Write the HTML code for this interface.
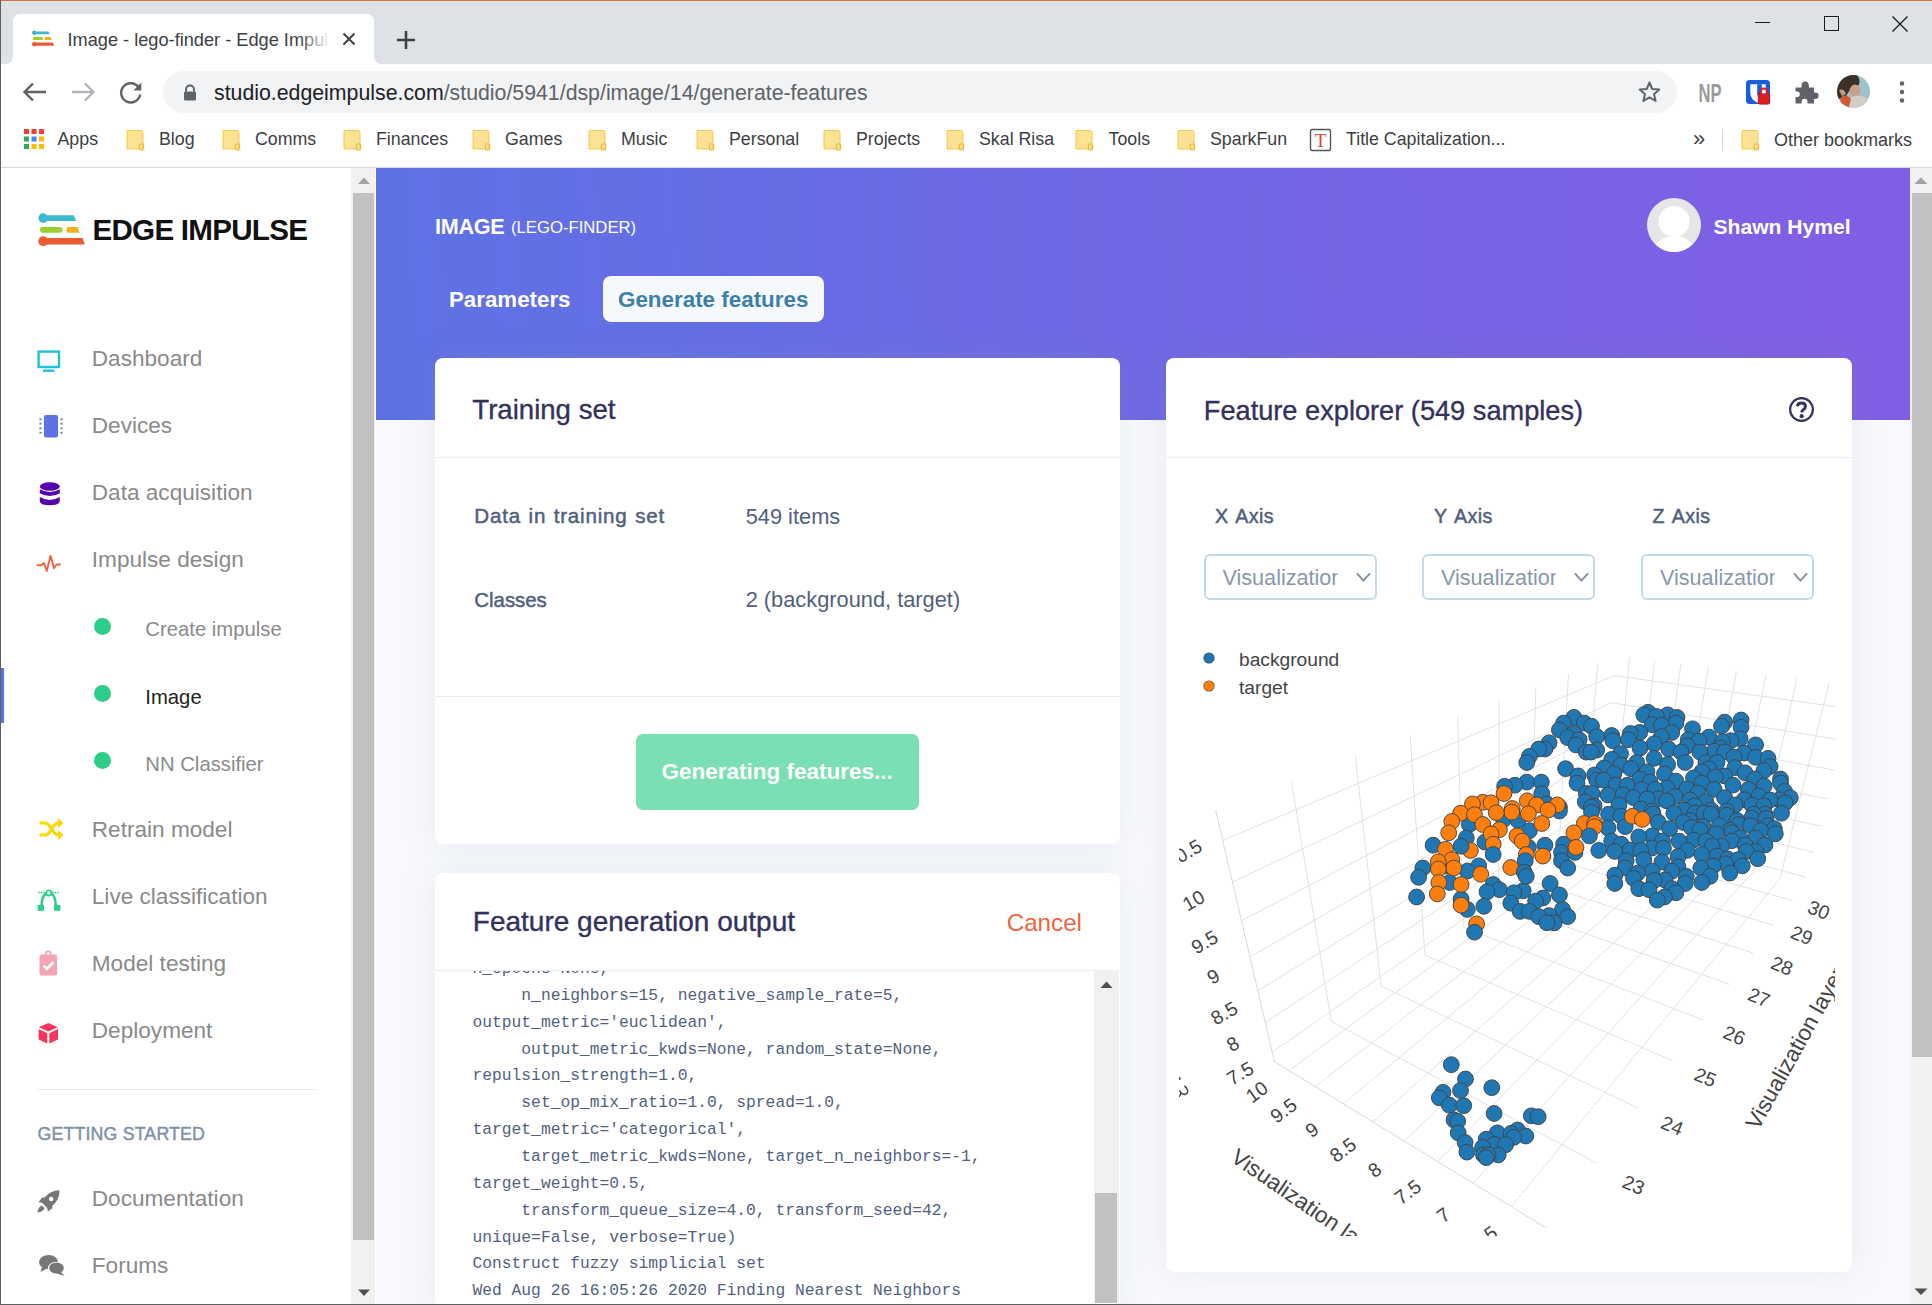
<!DOCTYPE html><html><head><meta charset='utf-8'><title>Image - lego-finder - Edge Impulse</title>
<style>
html,body{margin:0;padding:0;}
body{width:1932px;height:1305px;overflow:hidden;position:relative;background:#fff;font-family:'Liberation Sans',sans-serif;}
.t{position:absolute;white-space:pre;}
.r{position:absolute;}
</style></head><body>
<div class='r' style='left:0px;top:0px;width:1932px;height:64px;background:#dee1e6;'></div><div class='r' style='left:0px;top:0px;width:1932px;height:1px;background:#d4703c;'></div><svg class='r' style='left:0px;top:13px;' width='390' height='52' viewBox='0 0 390 52'><path d='M5 51 Q13 51 13 43 L13 9 Q13 1 21 1 L366 1 Q374 1 374 9 L374 43 Q374 51 382 51 Z' fill='#fff'/></svg><svg class='r' style='left:30px;top:29px;' width='28' height='20' viewBox='0 0 28 20'>
<path d='M4.3 2.4 H18.5 L19.8 5.2 H4.3 Z' fill='#3cb8cf'/><circle cx='4.3' cy='3.8' r='2.2' fill='#3cb8cf'/>
<rect x='2.6' y='8' width='10.6' height='3' rx='1.5' fill='#9bcf2a'/>
<path d='M15.2 8 H20.6 L21.7 11 H15.2 Q14.4 11 14.4 9.5 Q14.4 8 15.2 8Z' fill='#f2b01e'/>
<path d='M4.3 13.6 H23 L24.2 16.8 H4.3 Z' fill='#ec5a33'/><circle cx='4.3' cy='15.2' r='2.3' fill='#ec5a33'/>
</svg><div class='t' style='left:67.50px;top:31.15px;font-size:18.2px;line-height:18.2px;color:#3c4043;font-weight:normal;letter-spacing:0px;font-family:"Liberation Sans", sans-serif;'>Image - lego-finder - Edge Impul</div><div class='r' style='left:300px;top:28px;width:30px;height:22px;background:linear-gradient(90deg,rgba(255,255,255,0),#fff);'></div><svg class='r' style='left:342px;top:32px;' width='14' height='14' viewBox='0 0 14 14'><path d='M1.5 1.5 L12.5 12.5 M12.5 1.5 L1.5 12.5' stroke='#3c4043' stroke-width='2'/></svg><svg class='r' style='left:396px;top:30px;' width='20' height='20' viewBox='0 0 20 20'><path d='M10 1 V19 M1 10 H19' stroke='#3c4043' stroke-width='2.6'/></svg><div class='r' style='left:1755px;top:22px;width:15px;height:1px;background:#1a1a1a;'></div><div class='r' style='left:1824px;top:16px;width:15px;height:15px;background:transparent;border:1.3px solid #1a1a1a;box-sizing:border-box'></div><svg class='r' style='left:1891px;top:15px;' width='18' height='18' viewBox='0 0 18 18'><path d='M1.5 1.5 L16.5 16.5 M16.5 1.5 L1.5 16.5' stroke='#1a1a1a' stroke-width='1.3'/></svg><div class='r' style='left:0px;top:64px;width:1932px;height:54px;background:#fff;'></div><svg class='r' style='left:20px;top:80px;' width='30' height='24' viewBox='0 0 30 24'><path d='M26 12 H5 M13 3.5 L4.5 12 L13 20.5' stroke='#5f6368' stroke-width='2.4' fill='none'/></svg><svg class='r' style='left:68px;top:80px;' width='30' height='24' viewBox='0 0 30 24'><path d='M4 12 H25 M17 3.5 L25.5 12 L17 20.5' stroke='#b0b3b8' stroke-width='2.4' fill='none'/></svg><svg class='r' style='left:116px;top:79px;' width='30' height='26' viewBox='0 0 30 26'><path d='M22.5 8.2 A9.6 9.6 0 1 0 24.2 15.5' stroke='#5f6368' stroke-width='2.4' fill='none'/><path d='M25.3 3.5 V11.5 H17.3 Z' fill='#5f6368'/></svg><div class='r' style='left:163px;top:71px;width:1514px;height:42px;background:#f1f3f4;border-radius:21px'></div><svg class='r' style='left:182px;top:84px;' width='16' height='18' viewBox='0 0 16 18'><path d='M4 7.5 V5.5 A4 4 0 0 1 12 5.5 V7.5' stroke='#5f6368' stroke-width='2' fill='none'/><rect x='2' y='7.5' width='12' height='9' rx='1.3' fill='#5f6368'/></svg><div class='t' style='left:214.00px;top:82.60px;font-size:21.3px;line-height:21.3px;color:#5f6368;font-weight:normal;letter-spacing:0px;font-family:"Liberation Sans", sans-serif;'><span style='color:#202124'>studio.edgeimpulse.com</span>/studio/5941/dsp/image/14/generate-features</div><svg class='r' style='left:1637px;top:80px;' width='25' height='24' viewBox='0 0 25 24'><path d='M12.5 2.5 L15.3 9 L22.3 9.6 L17 14.2 L18.6 21 L12.5 17.4 L6.4 21 L8 14.2 L2.7 9.6 L9.7 9 Z' stroke='#5f6368' stroke-width='2' fill='none' stroke-linejoin='round'/></svg><svg class='r' style='left:1697px;top:80px;' width='26' height='24' viewBox='0 0 26 24'><text x='1.5' y='22' font-family='Liberation Sans' font-weight='bold' font-size='25' fill='#9a9a9a' textLength='23' lengthAdjust='spacingAndGlyphs'>NP</text></svg><svg class='r' style='left:1744px;top:78px;' width='28' height='28' viewBox='0 0 28 28'><rect x='2' y='2' width='24' height='24' rx='3.5' fill='#175ddc'/><path d='M6.3 6.2 H21.7 V15 Q21.7 21.5 14 25 Q6.3 21.5 6.3 15 Z' fill='#fff'/><rect x='13.2' y='6.2' width='4.6' height='11' fill='#175ddc'/><rect x='14.2' y='15.6' width='11.4' height='10.6' rx='1.6' fill='#e11b22' stroke='#7a1010' stroke-width='0.6'/><path d='M16.8 15.8 V13.6 A3.1 3.1 0 0 1 23 13.6 V15.8' stroke='#e11b22' stroke-width='2' fill='none'/><circle cx='19.9' cy='14.6' r='1.1' fill='#fff'/></svg><svg class='r' style='left:1793px;top:79px;' width='26' height='26' viewBox='0 0 26 26'><path d='M2.5 8.5 H8.5 V7 Q8.5 2.5 12.2 2.5 Q15.9 2.5 15.9 7 V8.5 H21 V13.5 H22.2 Q25.6 13.5 25.6 16.7 Q25.6 19.9 22.2 19.9 H21 V24.5 H14.5 V22.5 Q14.5 19.8 11.6 19.8 Q8.7 19.8 8.7 22.5 V24.5 H2.5 V18 H4 Q6.8 18 6.8 15.2 Q6.8 12.4 4 12.4 H2.5 Z' fill='#5f6368'/></svg><svg class='r' style='left:1836px;top:74px;' width='36' height='36' viewBox='0 0 36 36'><defs><clipPath id='avc2'><circle cx='17.5' cy='17.5' r='16.5'/></clipPath></defs><g clip-path='url(#avc2)'><rect width='36' height='36' fill='#9fc3cb'/><path d='M0 0 H20 Q26 6 22 12 Q14 14 10 22 Q4 26 0 24 Z' fill='#3b3129'/><ellipse cx='19' cy='17' rx='5.5' ry='6.5' fill='#c7a287'/><path d='M14 24 Q22 19 30 24 L34 36 H12 Z' fill='#d3cfc6'/><path d='M6 22 Q12 20 15 25 L13 33 Q6 32 4 27 Z' fill='#cf5a34'/><path d='M3 16 Q8 14 10 20 L6 22 Z' fill='#c49a80'/></g></svg><svg class='r' style='left:1896px;top:80px;' width='12' height='24' viewBox='0 0 12 24'><circle cx='6' cy='3.5' r='2.2' fill='#5f6368'/><circle cx='6' cy='12' r='2.2' fill='#5f6368'/><circle cx='6' cy='20.5' r='2.2' fill='#5f6368'/></svg><div class='r' style='left:0px;top:118px;width:1932px;height:49px;background:#fff;'></div><div class='r' style='left:0px;top:167px;width:1932px;height:1px;background:#d7d9dc;'></div><svg class='r' style='left:24px;top:129px;' width='21' height='21' viewBox='0 0 21 21'><rect x='0.0' y='0.0' width='5' height='5' fill='#ea4335'/><rect x='7.5' y='0.0' width='5' height='5' fill='#ea4335'/><rect x='15.0' y='0.0' width='5' height='5' fill='#ea4335'/><rect x='0.0' y='7.5' width='5' height='5' fill='#34a853'/><rect x='7.5' y='7.5' width='5' height='5' fill='#4285f4'/><rect x='15.0' y='7.5' width='5' height='5' fill='#fbbc05'/><rect x='0.0' y='15.0' width='5' height='5' fill='#34a853'/><rect x='7.5' y='15.0' width='5' height='5' fill='#fbbc05'/><rect x='15.0' y='15.0' width='5' height='5' fill='#fbbc05'/></svg><div class='t' style='left:57.50px;top:131.35px;font-size:17.8px;line-height:17.8px;color:#3c4043;font-weight:normal;letter-spacing:0px;font-family:"Liberation Sans", sans-serif;'>Apps</div><svg class='r' style='left:125.5px;top:129px;' width='19' height='22' viewBox='0 0 19 22'><path d='M1 1.5 H15 Q17 1.5 17 3.5 V20 H1 Z' fill='#fde293' stroke='#f2c94c' stroke-width='1'/><rect x='13.3' y='15' width='4.4' height='6' rx='1' fill='none' stroke='#e7b728' stroke-width='1'/></svg><div class='t' style='left:159.00px;top:131.35px;font-size:17.8px;line-height:17.8px;color:#3c4043;font-weight:normal;letter-spacing:0px;font-family:"Liberation Sans", sans-serif;'>Blog</div><svg class='r' style='left:222px;top:129px;' width='19' height='22' viewBox='0 0 19 22'><path d='M1 1.5 H15 Q17 1.5 17 3.5 V20 H1 Z' fill='#fde293' stroke='#f2c94c' stroke-width='1'/><rect x='13.3' y='15' width='4.4' height='6' rx='1' fill='none' stroke='#e7b728' stroke-width='1'/></svg><div class='t' style='left:255.00px;top:131.35px;font-size:17.8px;line-height:17.8px;color:#3c4043;font-weight:normal;letter-spacing:0px;font-family:"Liberation Sans", sans-serif;'>Comms</div><svg class='r' style='left:343px;top:129px;' width='19' height='22' viewBox='0 0 19 22'><path d='M1 1.5 H15 Q17 1.5 17 3.5 V20 H1 Z' fill='#fde293' stroke='#f2c94c' stroke-width='1'/><rect x='13.3' y='15' width='4.4' height='6' rx='1' fill='none' stroke='#e7b728' stroke-width='1'/></svg><div class='t' style='left:376.00px;top:131.35px;font-size:17.8px;line-height:17.8px;color:#3c4043;font-weight:normal;letter-spacing:0px;font-family:"Liberation Sans", sans-serif;'>Finances</div><svg class='r' style='left:472px;top:129px;' width='19' height='22' viewBox='0 0 19 22'><path d='M1 1.5 H15 Q17 1.5 17 3.5 V20 H1 Z' fill='#fde293' stroke='#f2c94c' stroke-width='1'/><rect x='13.3' y='15' width='4.4' height='6' rx='1' fill='none' stroke='#e7b728' stroke-width='1'/></svg><div class='t' style='left:505.00px;top:131.35px;font-size:17.8px;line-height:17.8px;color:#3c4043;font-weight:normal;letter-spacing:0px;font-family:"Liberation Sans", sans-serif;'>Games</div><svg class='r' style='left:588px;top:129px;' width='19' height='22' viewBox='0 0 19 22'><path d='M1 1.5 H15 Q17 1.5 17 3.5 V20 H1 Z' fill='#fde293' stroke='#f2c94c' stroke-width='1'/><rect x='13.3' y='15' width='4.4' height='6' rx='1' fill='none' stroke='#e7b728' stroke-width='1'/></svg><div class='t' style='left:621.00px;top:131.35px;font-size:17.8px;line-height:17.8px;color:#3c4043;font-weight:normal;letter-spacing:0px;font-family:"Liberation Sans", sans-serif;'>Music</div><svg class='r' style='left:695.5px;top:129px;' width='19' height='22' viewBox='0 0 19 22'><path d='M1 1.5 H15 Q17 1.5 17 3.5 V20 H1 Z' fill='#fde293' stroke='#f2c94c' stroke-width='1'/><rect x='13.3' y='15' width='4.4' height='6' rx='1' fill='none' stroke='#e7b728' stroke-width='1'/></svg><div class='t' style='left:729.00px;top:131.35px;font-size:17.8px;line-height:17.8px;color:#3c4043;font-weight:normal;letter-spacing:0px;font-family:"Liberation Sans", sans-serif;'>Personal</div><svg class='r' style='left:823px;top:129px;' width='19' height='22' viewBox='0 0 19 22'><path d='M1 1.5 H15 Q17 1.5 17 3.5 V20 H1 Z' fill='#fde293' stroke='#f2c94c' stroke-width='1'/><rect x='13.3' y='15' width='4.4' height='6' rx='1' fill='none' stroke='#e7b728' stroke-width='1'/></svg><div class='t' style='left:856.00px;top:131.35px;font-size:17.8px;line-height:17.8px;color:#3c4043;font-weight:normal;letter-spacing:0px;font-family:"Liberation Sans", sans-serif;'>Projects</div><svg class='r' style='left:945.5px;top:129px;' width='19' height='22' viewBox='0 0 19 22'><path d='M1 1.5 H15 Q17 1.5 17 3.5 V20 H1 Z' fill='#fde293' stroke='#f2c94c' stroke-width='1'/><rect x='13.3' y='15' width='4.4' height='6' rx='1' fill='none' stroke='#e7b728' stroke-width='1'/></svg><div class='t' style='left:979.00px;top:131.35px;font-size:17.8px;line-height:17.8px;color:#3c4043;font-weight:normal;letter-spacing:0px;font-family:"Liberation Sans", sans-serif;'>Skal Risa</div><svg class='r' style='left:1075px;top:129px;' width='19' height='22' viewBox='0 0 19 22'><path d='M1 1.5 H15 Q17 1.5 17 3.5 V20 H1 Z' fill='#fde293' stroke='#f2c94c' stroke-width='1'/><rect x='13.3' y='15' width='4.4' height='6' rx='1' fill='none' stroke='#e7b728' stroke-width='1'/></svg><div class='t' style='left:1108.60px;top:131.35px;font-size:17.8px;line-height:17.8px;color:#3c4043;font-weight:normal;letter-spacing:0px;font-family:"Liberation Sans", sans-serif;'>Tools</div><svg class='r' style='left:1177px;top:129px;' width='19' height='22' viewBox='0 0 19 22'><path d='M1 1.5 H15 Q17 1.5 17 3.5 V20 H1 Z' fill='#fde293' stroke='#f2c94c' stroke-width='1'/><rect x='13.3' y='15' width='4.4' height='6' rx='1' fill='none' stroke='#e7b728' stroke-width='1'/></svg><div class='t' style='left:1210.00px;top:131.35px;font-size:17.8px;line-height:17.8px;color:#3c4043;font-weight:normal;letter-spacing:0px;font-family:"Liberation Sans", sans-serif;'>SparkFun</div><svg class='r' style='left:1309px;top:128px;' width='24' height='24' viewBox='0 0 24 24'><rect x='1.5' y='1.5' width='20' height='21' rx='1.5' fill='#fff' stroke='#555' stroke-width='1.4'/><text x='11.5' y='19' font-family='Liberation Serif' font-size='19' fill='#e0452b' text-anchor='middle'>T</text></svg><div class='t' style='left:1346.00px;top:131.35px;font-size:17.8px;line-height:17.8px;color:#3c4043;font-weight:normal;letter-spacing:0px;font-family:"Liberation Sans", sans-serif;'>Title Capitalization...</div><div class='t' style='left:1693.00px;top:127.75px;font-size:22px;line-height:22px;color:#3c4043;font-weight:normal;letter-spacing:0px;font-family:"Liberation Sans", sans-serif;'>&#187;</div><div class='r' style='left:1722px;top:129px;width:1px;height:22px;background:#d7d9dc;'></div><svg class='r' style='left:1741px;top:129px;' width='19' height='22' viewBox='0 0 19 22'><path d='M1 1.5 H15 Q17 1.5 17 3.5 V20 H1 Z' fill='#fde293' stroke='#f2c94c' stroke-width='1'/><rect x='13.3' y='15' width='4.4' height='6' rx='1' fill='none' stroke='#e7b728' stroke-width='1'/></svg><div class='t' style='left:1774.00px;top:131.25px;font-size:18.0px;line-height:18.0px;color:#3c4043;font-weight:normal;letter-spacing:0px;font-family:"Liberation Sans", sans-serif;'>Other bookmarks</div><div class='r' style='left:0px;top:0px;width:1px;height:1305px;background:#606060;'></div><div class='r' style='left:1px;top:168px;width:350px;height:1137px;background:#fff;'></div><div class='r' style='left:351px;top:168px;width:24px;height:1137px;background:#f1f1f1;'></div><div class='r' style='left:353px;top:193px;width:21px;height:1047px;background:#c1c1c1;'></div><svg class='r' style='left:357px;top:176px;' width='14' height='10' viewBox='0 0 14 10'><path d='M1 8 L7 1.5 L13 8 Z' fill='#a3a3a3'/></svg><svg class='r' style='left:357px;top:1288px;' width='14' height='10' viewBox='0 0 14 10'><path d='M1 1.5 L7 8 L13 1.5 Z' fill='#505050'/></svg><div class='r' style='left:375px;top:168px;width:1px;height:1137px;background:#fff;'></div><div class='r' style='left:376px;top:168px;width:1534px;height:1137px;background:#f8f9fe;'></div><div class='r' style='left:376px;top:168px;width:1534px;height:252px;background:linear-gradient(87deg,#5e72e4 0,#825ee4 100%);'></div><div class='r' style='left:1910px;top:168px;width:22px;height:1137px;background:#f1f1f1;'></div><div class='r' style='left:1912px;top:193px;width:20px;height:864px;background:#c1c1c1;'></div><svg class='r' style='left:1913px;top:176px;' width='16' height='10' viewBox='0 0 16 10'><path d='M1.5 8 L8 1.5 L14.5 8 Z' fill='#a3a3a3'/></svg><svg class='r' style='left:1913px;top:1287px;' width='16' height='10' viewBox='0 0 16 10'><path d='M1.5 1.5 L8 8 L14.5 1.5 Z' fill='#505050'/></svg><svg class='r' style='left:37px;top:212px;' width='50' height='36' viewBox='0 0 50 36'>
<path d='M6.2 3.2 H36.6 L39.2 9 H6.2 Z' fill='#3cb8cf'/><circle cx='6.2' cy='6.1' r='4.8' fill='#3cb8cf'/>
<rect x='3' y='15' width='22.6' height='5.7' rx='2.85' fill='#9bcf2a'/>
<path d='M30.5 15 H40.5 L42.7 20.7 H30.5 Q29.5 20.7 29.5 17.85 Q29.5 15 30.5 15 Z' fill='#f2b01e'/>
<path d='M6.2 26 H45.6 L47.8 32.4 H6.2 Z' fill='#ec5a33'/><circle cx='6.2' cy='29.2' r='4.9' fill='#ec5a33'/>
</svg><div class='t' style='left:92.50px;top:214.95px;font-size:29.6px;line-height:29.6px;color:#111;font-weight:bold;letter-spacing:-0.75px;font-family:"Liberation Sans", sans-serif;'>EDGE IMPULSE</div><div class='t' style='left:91.80px;top:348.45px;font-size:22.6px;line-height:22.6px;color:#8a8a8a;font-weight:normal;letter-spacing:0px;font-family:"Liberation Sans", sans-serif;'>Dashboard</div><div class='t' style='left:91.80px;top:415.45px;font-size:22.6px;line-height:22.6px;color:#8a8a8a;font-weight:normal;letter-spacing:0px;font-family:"Liberation Sans", sans-serif;'>Devices</div><div class='t' style='left:91.80px;top:482.45px;font-size:22.6px;line-height:22.6px;color:#8a8a8a;font-weight:normal;letter-spacing:0px;font-family:"Liberation Sans", sans-serif;'>Data acquisition</div><div class='t' style='left:91.80px;top:549.45px;font-size:22.6px;line-height:22.6px;color:#8a8a8a;font-weight:normal;letter-spacing:0px;font-family:"Liberation Sans", sans-serif;'>Impulse design</div><div class='t' style='left:91.80px;top:819.45px;font-size:22.6px;line-height:22.6px;color:#8a8a8a;font-weight:normal;letter-spacing:0px;font-family:"Liberation Sans", sans-serif;'>Retrain model</div><div class='t' style='left:91.80px;top:886.45px;font-size:22.6px;line-height:22.6px;color:#8a8a8a;font-weight:normal;letter-spacing:0px;font-family:"Liberation Sans", sans-serif;'>Live classification</div><div class='t' style='left:91.80px;top:953.45px;font-size:22.6px;line-height:22.6px;color:#8a8a8a;font-weight:normal;letter-spacing:0px;font-family:"Liberation Sans", sans-serif;'>Model testing</div><div class='t' style='left:91.80px;top:1020.45px;font-size:22.6px;line-height:22.6px;color:#8a8a8a;font-weight:normal;letter-spacing:0px;font-family:"Liberation Sans", sans-serif;'>Deployment</div><div class='t' style='left:145.30px;top:619.10px;font-size:20.3px;line-height:20.3px;color:#8a8a8a;font-weight:normal;letter-spacing:0px;font-family:"Liberation Sans", sans-serif;'>Create impulse</div><div class='r' style='left:93.5px;top:617.7px;width:17px;height:17px;border-radius:50%;background:#2dce89'></div><div class='t' style='left:145.30px;top:687.10px;font-size:20.3px;line-height:20.3px;color:#222;font-weight:normal;letter-spacing:0px;font-family:"Liberation Sans", sans-serif;'>Image</div><div class='r' style='left:93.5px;top:685.0px;width:17px;height:17px;border-radius:50%;background:#2dce89'></div><div class='t' style='left:145.30px;top:754.10px;font-size:20.3px;line-height:20.3px;color:#8a8a8a;font-weight:normal;letter-spacing:0px;font-family:"Liberation Sans", sans-serif;'>NN Classifier</div><div class='r' style='left:93.5px;top:752.3px;width:17px;height:17px;border-radius:50%;background:#2dce89'></div><div class='r' style='left:1px;top:668px;width:3px;height:55px;background:#5e72e4;'></div><div class='r' style='left:37px;top:1089px;width:279px;height:1px;background:#e9ecef;'></div><div class='t' style='left:37.50px;top:1126.35px;font-size:17.8px;line-height:17.8px;color:#8092a8;font-weight:normal;letter-spacing:0.15px;font-family:"Liberation Sans", sans-serif;-webkit-text-stroke:0.45px #8092a8'>GETTING STARTED</div><div class='t' style='left:91.80px;top:1188.45px;font-size:22.6px;line-height:22.6px;color:#8a8a8a;font-weight:normal;letter-spacing:0px;font-family:"Liberation Sans", sans-serif;'>Documentation</div><div class='t' style='left:91.80px;top:1255.45px;font-size:22.6px;line-height:22.6px;color:#8a8a8a;font-weight:normal;letter-spacing:0px;font-family:"Liberation Sans", sans-serif;'>Forums</div><svg class='r' style='left:36px;top:349px;' width='26' height='25' viewBox='0 0 26 25'><rect x='2.6' y='2.6' width='20.4' height='15.4' fill='none' stroke='#1fc0de' stroke-width='2.4'/><rect x='7' y='20.5' width='11.5' height='2.4' fill='#1fc0de'/></svg><svg class='r' style='left:38px;top:413px;' width='26' height='27' viewBox='0 0 26 27'><rect x='6' y='2' width='14' height='22.5' rx='2' fill='#5e72e4'/><path d='M1.5 5 L4.5 6.2 L1.5 7.4Z' fill='#5e72e4'/><path d='M24.5 5 L21.5 6.2 L24.5 7.4Z' fill='#5e72e4'/><path d='M1.5 9.5 L4.5 10.7 L1.5 11.9Z' fill='#5e72e4'/><path d='M24.5 9.5 L21.5 10.7 L24.5 11.9Z' fill='#5e72e4'/><path d='M1.5 14 L4.5 15.2 L1.5 16.4Z' fill='#5e72e4'/><path d='M24.5 14 L21.5 15.2 L24.5 16.4Z' fill='#5e72e4'/><path d='M1.5 18.5 L4.5 19.7 L1.5 20.9Z' fill='#5e72e4'/><path d='M24.5 18.5 L21.5 19.7 L24.5 20.9Z' fill='#5e72e4'/></svg><svg class='r' style='left:38px;top:480px;' width='24' height='27' viewBox='0 0 24 27'><ellipse cx='11.8' cy='6.5' rx='10' ry='4.3' fill='#5603ad'/>
<path d='M1.8 9.2 Q11.8 15 21.8 9.2 V13.2 Q11.8 19 1.8 13.2 Z' fill='#5603ad'/>
<path d='M1.8 17 Q11.8 22.8 21.8 17 V20.8 Q21.8 25.3 11.8 25.3 Q1.8 25.3 1.8 20.8 Z' fill='#5603ad'/></svg><svg class='r' style='left:36px;top:553px;' width='26' height='22' viewBox='0 0 26 22'><path d='M1.5 12.2 H5.5 L7.8 9.8 L10.8 18 L14.6 2.8 L18 15.2 L20.5 11.5 L24 11.5' stroke='#f0633f' stroke-width='1.9' fill='none' stroke-linejoin='round' stroke-linecap='round'/></svg><svg class='r' style='left:37px;top:817px;' width='28' height='25' viewBox='0 0 28 25'><path d='M2.5 6 H8 Q11 6 13.5 10 L16 14 Q18.5 18 21.5 18 H23' stroke='#ffd600' stroke-width='3.2' fill='none'/>
<path d='M2.5 18 H8 Q11 18 13.5 14 L16 10 Q18.5 6 21.5 6 H23' stroke='#ffd600' stroke-width='3.2' fill='none'/>
<path d='M21 1 L26.5 6 L21 11Z' fill='#ffd600'/><path d='M21 13 L26.5 18 L21 23Z' fill='#ffd600'/></svg><svg class='r' style='left:35px;top:888px;' width='28' height='24' viewBox='0 0 28 24'><path d='M6.5 20 Q6.5 5 13.7 5 Q20.8 5 20.8 20' stroke='#2dce89' stroke-width='2.6' fill='none'/>
<rect x='2.6' y='17' width='6.4' height='5.8' fill='#2dce89'/><rect x='19' y='17' width='6.4' height='5.8' fill='#2dce89'/>
<circle cx='13.7' cy='5' r='2.6' fill='#fff' stroke='#2dce89' stroke-width='1.8'/>
<path d='M3 4.5 H10.5 M17 4.5 H24' stroke='#2dce89' stroke-width='1.3' stroke-dasharray='1.6 1'/></svg><svg class='r' style='left:37px;top:950px;' width='24' height='28' viewBox='0 0 24 28'><rect x='2.5' y='4.6' width='17.6' height='20.8' rx='1.6' fill='#f3a4b5'/><circle cx='11.3' cy='4' r='2.6' fill='none' stroke='#f3a4b5' stroke-width='1.6'/>
<path d='M6.5 15.5 L9.8 18.8 L16.4 12' stroke='#fff' stroke-width='2.6' fill='none'/></svg><svg class='r' style='left:37px;top:1021px;' width='23' height='24' viewBox='0 0 23 24'><path d='M11.3 2 L20.8 6.2 L11.3 10.5 L1.8 6.2 Z' fill='#f5365c'/>
<path d='M1.6 8 L10.3 12.2 V22.6 L1.6 18.4 Z' fill='#f5365c'/><path d='M21 8 L12.3 12.2 V22.6 L21 18.4 Z' fill='#f5365c'/></svg><svg class='r' style='left:35px;top:1188px;' width='27' height='27' viewBox='0 0 27 27'><path d='M24.6 2.2 Q15 2.5 9.5 9.5 L6.8 9.8 L3.5 14.2 L7 14.8 L12.2 20 L12.8 23.5 L17.2 20.2 L17.5 17.5 Q24.5 12 24.6 2.2Z' fill='#777'/>
<circle cx='16.2' cy='11' r='2.2' fill='#fff'/><path d='M7 17.5 Q3 19 2.4 24.6 Q8 24 9.6 20Z' fill='#777'/></svg><svg class='r' style='left:38px;top:1253px;' width='30' height='25' viewBox='0 0 30 25'><ellipse cx='10.5' cy='9' rx='9.5' ry='7' fill='#777'/><path d='M4 14 L2.5 19 L9 15.5Z' fill='#777'/>
<ellipse cx='18.5' cy='15' rx='8.5' ry='6.3' fill='#fff'/><ellipse cx='18.5' cy='15' rx='7.3' ry='5.5' fill='#777'/><path d='M23 19 L26.5 23 L19 20.5Z' fill='#777'/></svg><div class='t' style='left:435.00px;top:215.95px;font-size:21.6px;line-height:21.6px;color:#fff;font-weight:bold;letter-spacing:-0.3px;font-family:"Liberation Sans", sans-serif;'>IMAGE</div><div class='t' style='left:511.00px;top:220.40px;font-size:16.7px;line-height:16.7px;color:#fff;font-weight:normal;letter-spacing:0px;font-family:"Liberation Sans", sans-serif;'>(LEGO-FINDER)</div><div class='t' style='left:449.00px;top:288.60px;font-size:22.3px;line-height:22.3px;color:#fff;font-weight:bold;letter-spacing:0px;font-family:"Liberation Sans", sans-serif;'>Parameters</div><div class='r' style='left:603px;top:276px;width:221px;height:46px;background:#f6f9fc;border-radius:8px'></div><div class='t' style='left:618.00px;top:288.55px;font-size:22.4px;line-height:22.4px;color:#3b7fa8;font-weight:bold;letter-spacing:0px;font-family:"Liberation Sans", sans-serif;'>Generate features</div><svg class='r' style='left:1646px;top:197px;' width='56' height='56' viewBox='0 0 56 56'><defs><clipPath id='avc'><circle cx='28' cy='28' r='27'/></clipPath></defs><circle cx='28' cy='28' r='27' fill='#e6e6e6'/><g clip-path='url(#avc)'><circle cx='28' cy='24.5' r='15.5' fill='#fff'/><ellipse cx='28' cy='56' rx='21' ry='17' fill='#fff'/></g></svg><div class='t' style='left:1713.50px;top:216.20px;font-size:21.1px;line-height:21.1px;color:#fff;font-weight:bold;letter-spacing:0px;font-family:"Liberation Sans", sans-serif;'>Shawn Hymel</div><div class='r' style='left:435px;top:358px;width:685px;height:486px;background:#fff;box-shadow:0 0 32px 0 rgba(136,152,170,.15);border-radius:8px'></div><div class='r' style='left:435px;top:457px;width:685px;height:1px;background:#ebedf2;'></div><div class='t' style='left:472.30px;top:395.95px;font-size:27.6px;line-height:27.6px;color:#32325d;font-weight:normal;letter-spacing:0px;font-family:"Liberation Sans", sans-serif;-webkit-text-stroke:0.35px #32325d'>Training set</div><div class='t' style='left:474.30px;top:506.45px;font-size:20.6px;line-height:20.6px;color:#525f7f;font-weight:normal;letter-spacing:0px;font-family:"Liberation Sans", sans-serif;letter-spacing:0.8px;word-spacing:1px;-webkit-text-stroke:0.5px #525f7f'>Data in training set</div><div class='t' style='left:745.70px;top:505.85px;font-size:21.8px;line-height:21.8px;color:#525f7f;font-weight:normal;letter-spacing:0px;font-family:"Liberation Sans", sans-serif;'>549 items</div><div class='t' style='left:474.30px;top:590.05px;font-size:20.4px;line-height:20.4px;color:#525f7f;font-weight:normal;letter-spacing:0px;font-family:"Liberation Sans", sans-serif;-webkit-text-stroke:0.5px #525f7f'>Classes</div><div class='t' style='left:745.70px;top:588.85px;font-size:21.8px;line-height:21.8px;color:#525f7f;font-weight:normal;letter-spacing:0px;font-family:"Liberation Sans", sans-serif;'>2 (background, target)</div><div class='r' style='left:435px;top:696px;width:685px;height:1px;background:#ebedf2;'></div><div class='r' style='left:636px;top:734px;width:283px;height:76px;background:#7adfb3;border-radius:7px'></div><div class='t' style='left:661.50px;top:760.50px;font-size:22.5px;line-height:22.5px;color:#fff;font-weight:bold;letter-spacing:0px;font-family:"Liberation Sans", sans-serif;'>Generating features...</div><div class='r' style='left:435px;top:873px;width:685px;height:440px;background:#fff;box-shadow:0 0 32px 0 rgba(136,152,170,.15);border-radius:8px'></div><div class='t' style='left:472.80px;top:907.75px;font-size:28.0px;line-height:28.0px;color:#32325d;font-weight:normal;letter-spacing:0px;font-family:"Liberation Sans", sans-serif;-webkit-text-stroke:0.35px #32325d'>Feature generation output</div><div class='t' style='right:850.00px;top:910.65px;font-size:24.2px;line-height:24.2px;color:#ee6541;font-weight:normal;letter-spacing:0px;font-family:"Liberation Sans", sans-serif;'>Cancel</div><div class='r' style='left:435px;top:970px;width:685px;height:1px;background:#ebedf2;'></div><div class='r' style='left:435px;top:971px;width:659px;height:332px;overflow:hidden'><div class='t' style='left:37.5px;top:-9.99px;font:16.3px/16.3px "Liberation Mono",monospace;color:#525f7f'>n_epochs=None,</div><div class='t' style='left:37.5px;top:16.86px;font:16.3px/16.3px "Liberation Mono",monospace;color:#525f7f'>     n_neighbors=15, negative_sample_rate=5,</div><div class='t' style='left:37.5px;top:43.71px;font:16.3px/16.3px "Liberation Mono",monospace;color:#525f7f'>output_metric='euclidean',</div><div class='t' style='left:37.5px;top:70.56px;font:16.3px/16.3px "Liberation Mono",monospace;color:#525f7f'>     output_metric_kwds=None, random_state=None,</div><div class='t' style='left:37.5px;top:97.41px;font:16.3px/16.3px "Liberation Mono",monospace;color:#525f7f'>repulsion_strength=1.0,</div><div class='t' style='left:37.5px;top:124.26px;font:16.3px/16.3px "Liberation Mono",monospace;color:#525f7f'>     set_op_mix_ratio=1.0, spread=1.0,</div><div class='t' style='left:37.5px;top:151.11px;font:16.3px/16.3px "Liberation Mono",monospace;color:#525f7f'>target_metric='categorical',</div><div class='t' style='left:37.5px;top:177.96px;font:16.3px/16.3px "Liberation Mono",monospace;color:#525f7f'>     target_metric_kwds=None, target_n_neighbors=-1,</div><div class='t' style='left:37.5px;top:204.81px;font:16.3px/16.3px "Liberation Mono",monospace;color:#525f7f'>target_weight=0.5,</div><div class='t' style='left:37.5px;top:231.66px;font:16.3px/16.3px "Liberation Mono",monospace;color:#525f7f'>     transform_queue_size=4.0, transform_seed=42,</div><div class='t' style='left:37.5px;top:258.51px;font:16.3px/16.3px "Liberation Mono",monospace;color:#525f7f'>unique=False, verbose=True)</div><div class='t' style='left:37.5px;top:285.36px;font:16.3px/16.3px "Liberation Mono",monospace;color:#525f7f'>Construct fuzzy simplicial set</div><div class='t' style='left:37.5px;top:312.21px;font:16.3px/16.3px "Liberation Mono",monospace;color:#525f7f'>Wed Aug 26 16:05:26 2020 Finding Nearest Neighbors</div></div><div class='r' style='left:1094px;top:971px;width:25px;height:332px;background:#f1f1f1;'></div><div class='r' style='left:1095px;top:1193px;width:22px;height:110px;background:#c1c1c1;'></div><svg class='r' style='left:1099px;top:980px;' width='15' height='10' viewBox='0 0 15 10'><path d='M1.5 8 L7.5 1.5 L13.5 8 Z' fill='#505050'/></svg><div class='r' style='left:1166px;top:358px;width:686px;height:914px;background:#fff;box-shadow:0 0 32px 0 rgba(136,152,170,.15);border-radius:8px'></div><div class='r' style='left:1166px;top:457px;width:686px;height:1px;background:#ebedf2;'></div><div class='t' style='left:1203.80px;top:397.15px;font-size:27.2px;line-height:27.2px;color:#32325d;font-weight:normal;letter-spacing:0px;font-family:"Liberation Sans", sans-serif;-webkit-text-stroke:0.35px #32325d'>Feature explorer (549 samples)</div><svg class='r' style='left:1788px;top:396px;' width='27' height='27' viewBox='0 0 27 27'><circle cx='13.5' cy='13.5' r='11.4' fill='none' stroke='#32325d' stroke-width='2.2'/><path d='M9.3 10.3 Q10 7 13.6 7 Q17.4 7 17.4 10.4 Q17.4 12.6 15.2 13.8 Q13.8 14.6 13.8 16.6' fill='none' stroke='#32325d' stroke-width='3' stroke-linecap='butt'/><circle cx='13.7' cy='20.2' r='2.1' fill='#32325d'/></svg><div class='t' style='left:1215.00px;top:507.40px;font-size:19.7px;line-height:19.7px;color:#525f7f;font-weight:normal;letter-spacing:0px;font-family:"Liberation Sans", sans-serif;letter-spacing:0.4px;word-spacing:2px;-webkit-text-stroke:0.5px #525f7f'>X Axis</div><div class='r' style='left:1203.5px;top:554px;width:173px;height:46px;background:#fff;border:2px solid #c3daec;border-radius:6px;box-sizing:border-box'></div><div class='r' style='left:1222.5px;top:560px;width:115px;height:34px;overflow:hidden'><div class='t' style='left:0;top:6.64px;font-size:21.6px;line-height:21.6px;color:#8898aa'>Visualization</div></div><svg class='r' style='left:1353.5px;top:570px;' width='19' height='14' viewBox='0 0 19 14'><path d='M3 3.3 L9.4 10.6 L16 3.3' stroke='#858f9c' stroke-width='2' fill='none'/></svg><div class='t' style='left:1434.00px;top:507.40px;font-size:19.7px;line-height:19.7px;color:#525f7f;font-weight:normal;letter-spacing:0px;font-family:"Liberation Sans", sans-serif;letter-spacing:0.4px;word-spacing:2px;-webkit-text-stroke:0.5px #525f7f'>Y Axis</div><div class='r' style='left:1422px;top:554px;width:173px;height:46px;background:#fff;border:2px solid #c3daec;border-radius:6px;box-sizing:border-box'></div><div class='r' style='left:1441px;top:560px;width:115px;height:34px;overflow:hidden'><div class='t' style='left:0;top:6.64px;font-size:21.6px;line-height:21.6px;color:#8898aa'>Visualization</div></div><svg class='r' style='left:1572px;top:570px;' width='19' height='14' viewBox='0 0 19 14'><path d='M3 3.3 L9.4 10.6 L16 3.3' stroke='#858f9c' stroke-width='2' fill='none'/></svg><div class='t' style='left:1652.60px;top:507.40px;font-size:19.7px;line-height:19.7px;color:#525f7f;font-weight:normal;letter-spacing:0px;font-family:"Liberation Sans", sans-serif;letter-spacing:0.4px;word-spacing:2px;-webkit-text-stroke:0.5px #525f7f'>Z Axis</div><div class='r' style='left:1641px;top:554px;width:173px;height:46px;background:#fff;border:2px solid #c3daec;border-radius:6px;box-sizing:border-box'></div><div class='r' style='left:1660px;top:560px;width:115px;height:34px;overflow:hidden'><div class='t' style='left:0;top:6.64px;font-size:21.6px;line-height:21.6px;color:#8898aa'>Visualization</div></div><svg class='r' style='left:1791px;top:570px;' width='19' height='14' viewBox='0 0 19 14'><path d='M3 3.3 L9.4 10.6 L16 3.3' stroke='#858f9c' stroke-width='2' fill='none'/></svg><div class='r' style='left:1204px;top:653px;width:10px;height:10px;border-radius:50%;background:#1f77b4;box-shadow:0 0 0 .6px #444'></div><div class='r' style='left:1204px;top:681px;width:10px;height:10px;border-radius:50%;background:#ff7f0e;box-shadow:0 0 0 .6px #444'></div><div class='t' style='left:1239.00px;top:650.15px;font-size:19.2px;line-height:19.2px;color:#444;font-weight:normal;letter-spacing:0px;font-family:"Liberation Sans", sans-serif;'>background</div><div class='t' style='left:1239.00px;top:678.15px;font-size:19.2px;line-height:19.2px;color:#444;font-weight:normal;letter-spacing:0px;font-family:"Liberation Sans", sans-serif;'>target</div><svg class='r' style='left:1179px;top:640px;overflow:hidden' width='656' height='596' viewBox='0 0 656 596'><g transform='translate(-1179 -640)'><line x1='1331.3' y1='1021.4' x2='1291.3' y2='780.8' stroke='#e2e2e2' stroke-width='1.0'/><line x1='1381.1' y1='986.1' x2='1355.3' y2='756.1' stroke='#e2e2e2' stroke-width='1.0'/><line x1='1424.9' y1='955.1' x2='1410.1' y2='735.1' stroke='#e2e2e2' stroke-width='1.0'/><line x1='1463.9' y1='927.5' x2='1457.6' y2='716.8' stroke='#e2e2e2' stroke-width='1.0'/><line x1='1498.7' y1='902.8' x2='1499.2' y2='700.8' stroke='#e2e2e2' stroke-width='1.0'/><line x1='1530.0' y1='880.6' x2='1535.9' y2='686.7' stroke='#e2e2e2' stroke-width='1.0'/><line x1='1558.3' y1='860.5' x2='1568.5' y2='674.1' stroke='#e2e2e2' stroke-width='1.0'/><line x1='1584.1' y1='842.3' x2='1597.6' y2='662.9' stroke='#e2e2e2' stroke-width='1.0'/><line x1='1272.1' y1='1052.2' x2='1600.9' y2='823.5' stroke='#e2e2e2' stroke-width='1.0'/><line x1='1265.2' y1='1022.4' x2='1602.9' y2='801.2' stroke='#e2e2e2' stroke-width='1.0'/><line x1='1257.8' y1='990.7' x2='1604.9' y2='778.0' stroke='#e2e2e2' stroke-width='1.0'/><line x1='1249.9' y1='956.9' x2='1607.1' y2='753.9' stroke='#e2e2e2' stroke-width='1.0'/><line x1='1241.4' y1='920.8' x2='1609.3' y2='728.8' stroke='#e2e2e2' stroke-width='1.0'/><line x1='1232.4' y1='882.1' x2='1611.6' y2='702.7' stroke='#e2e2e2' stroke-width='1.0'/><line x1='1222.7' y1='840.5' x2='1614.0' y2='675.5' stroke='#e2e2e2' stroke-width='1.0'/><line x1='1511.4' y1='1206.6' x2='1779.9' y2='878.7' stroke='#e2e2e2' stroke-width='1.0'/><line x1='1473.3' y1='1183.4' x2='1753.3' y2='871.6' stroke='#e2e2e2' stroke-width='1.0'/><line x1='1437.7' y1='1161.6' x2='1727.6' y2='864.8' stroke='#e2e2e2' stroke-width='1.0'/><line x1='1404.2' y1='1141.1' x2='1702.9' y2='858.2' stroke='#e2e2e2' stroke-width='1.0'/><line x1='1372.7' y1='1121.9' x2='1679.0' y2='851.8' stroke='#e2e2e2' stroke-width='1.0'/><line x1='1343.1' y1='1103.8' x2='1655.9' y2='845.7' stroke='#e2e2e2' stroke-width='1.0'/><line x1='1315.2' y1='1086.7' x2='1633.7' y2='839.7' stroke='#e2e2e2' stroke-width='1.0'/><line x1='1288.7' y1='1070.5' x2='1612.2' y2='834.0' stroke='#e2e2e2' stroke-width='1.0'/><line x1='1596.0' y1='1162.9' x2='1331.3' y2='1021.4' stroke='#e2e2e2' stroke-width='1.0'/><line x1='1637.3' y1='1107.7' x2='1381.1' y2='986.1' stroke='#e2e2e2' stroke-width='1.0'/><line x1='1672.6' y1='1060.6' x2='1424.9' y2='955.1' stroke='#e2e2e2' stroke-width='1.0'/><line x1='1703.1' y1='1019.9' x2='1463.9' y2='927.5' stroke='#e2e2e2' stroke-width='1.0'/><line x1='1729.8' y1='984.4' x2='1498.7' y2='902.8' stroke='#e2e2e2' stroke-width='1.0'/><line x1='1753.2' y1='953.1' x2='1530.0' y2='880.6' stroke='#e2e2e2' stroke-width='1.0'/><line x1='1774.0' y1='925.4' x2='1558.3' y2='860.5' stroke='#e2e2e2' stroke-width='1.0'/><line x1='1792.6' y1='900.6' x2='1584.1' y2='842.3' stroke='#e2e2e2' stroke-width='1.0'/><line x1='1779.9' y1='878.7' x2='1829.1' y2='682.7' stroke='#e2e2e2' stroke-width='1.0'/><line x1='1753.3' y1='871.6' x2='1796.9' y2='678.6' stroke='#e2e2e2' stroke-width='1.0'/><line x1='1727.6' y1='864.8' x2='1766.0' y2='674.8' stroke='#e2e2e2' stroke-width='1.0'/><line x1='1702.9' y1='858.2' x2='1736.4' y2='671.1' stroke='#e2e2e2' stroke-width='1.0'/><line x1='1679.0' y1='851.8' x2='1708.1' y2='667.5' stroke='#e2e2e2' stroke-width='1.0'/><line x1='1655.9' y1='845.7' x2='1680.9' y2='664.1' stroke='#e2e2e2' stroke-width='1.0'/><line x1='1633.7' y1='839.7' x2='1654.7' y2='660.8' stroke='#e2e2e2' stroke-width='1.0'/><line x1='1612.2' y1='834.0' x2='1629.6' y2='657.7' stroke='#e2e2e2' stroke-width='1.0'/><line x1='1806.3' y1='877.1' x2='1600.9' y2='823.5' stroke='#e2e2e2' stroke-width='1.0'/><line x1='1813.2' y1='852.2' x2='1602.9' y2='801.2' stroke='#e2e2e2' stroke-width='1.0'/><line x1='1820.3' y1='826.1' x2='1604.9' y2='778.0' stroke='#e2e2e2' stroke-width='1.0'/><line x1='1827.7' y1='798.9' x2='1607.1' y2='753.9' stroke='#e2e2e2' stroke-width='1.0'/><line x1='1835.6' y1='770.3' x2='1609.3' y2='728.8' stroke='#e2e2e2' stroke-width='1.0'/><line x1='1843.8' y1='740.4' x2='1611.6' y2='702.7' stroke='#e2e2e2' stroke-width='1.0'/><line x1='1852.4' y1='709.0' x2='1614.0' y2='675.5' stroke='#e2e2e2' stroke-width='1.0'/><line x1='1274.4' y1='1061.7' x2='1215.6' y2='809.9' stroke='#d9d9d9' stroke-width='1.0'/><line x1='1546.9' y1='1228.4' x2='1274.4' y2='1061.7' stroke='#d9d9d9' stroke-width='1.0'/><text x='1183.6' y='853.6' transform='rotate(-30 1183.6 853.6)' font-family='Liberation Sans' font-size='19.5' fill='#444' text-anchor='middle' dominant-baseline='central'>10.5</text><text x='1193.5' y='900.2' transform='rotate(-30 1193.5 900.2)' font-family='Liberation Sans' font-size='19.5' fill='#444' text-anchor='middle' dominant-baseline='central'>10</text><text x='1204.5' y='941.9' transform='rotate(-30 1204.5 941.9)' font-family='Liberation Sans' font-size='19.5' fill='#444' text-anchor='middle' dominant-baseline='central'>9.5</text><text x='1213.1' y='976.2' transform='rotate(-30 1213.1 976.2)' font-family='Liberation Sans' font-size='19.5' fill='#444' text-anchor='middle' dominant-baseline='central'>9</text><text x='1224.1' y='1013.0' transform='rotate(-30 1224.1 1013.0)' font-family='Liberation Sans' font-size='19.5' fill='#444' text-anchor='middle' dominant-baseline='central'>8.5</text><text x='1232.7' y='1043.7' transform='rotate(-30 1232.7 1043.7)' font-family='Liberation Sans' font-size='19.5' fill='#444' text-anchor='middle' dominant-baseline='central'>8</text><text x='1240.1' y='1073.1' transform='rotate(-30 1240.1 1073.1)' font-family='Liberation Sans' font-size='19.5' fill='#444' text-anchor='middle' dominant-baseline='central'>7.5</text><text x='1256.6' y='1091.7' transform='rotate(-36 1256.6 1091.7)' font-family='Liberation Sans' font-size='19.5' fill='#444' text-anchor='middle' dominant-baseline='central'>10</text><text x='1283.4' y='1110.3' transform='rotate(-36 1283.4 1110.3)' font-family='Liberation Sans' font-size='19.5' fill='#444' text-anchor='middle' dominant-baseline='central'>9.5</text><text x='1311.7' y='1129.7' transform='rotate(-36 1311.7 1129.7)' font-family='Liberation Sans' font-size='19.5' fill='#444' text-anchor='middle' dominant-baseline='central'>9</text><text x='1342.8' y='1149.7' transform='rotate(-36 1342.8 1149.7)' font-family='Liberation Sans' font-size='19.5' fill='#444' text-anchor='middle' dominant-baseline='central'>8.5</text><text x='1374.5' y='1169.7' transform='rotate(-36 1374.5 1169.7)' font-family='Liberation Sans' font-size='19.5' fill='#444' text-anchor='middle' dominant-baseline='central'>8</text><text x='1407.7' y='1191.8' transform='rotate(-36 1407.7 1191.8)' font-family='Liberation Sans' font-size='19.5' fill='#444' text-anchor='middle' dominant-baseline='central'>7.5</text><text x='1443.4' y='1214.8' transform='rotate(-36 1443.4 1214.8)' font-family='Liberation Sans' font-size='19.5' fill='#444' text-anchor='middle' dominant-baseline='central'>7</text><text x='1484.0' y='1238.0' transform='rotate(-36 1484.0 1238.0)' font-family='Liberation Sans' font-size='19.5' fill='#444' text-anchor='middle' dominant-baseline='central'>6.5</text><text x='1633.7' y='1184.7' transform='rotate(22 1633.7 1184.7)' font-family='Liberation Sans' font-size='19.5' fill='#444' text-anchor='middle' dominant-baseline='central'>23</text><text x='1672.3' y='1125.4' transform='rotate(22 1672.3 1125.4)' font-family='Liberation Sans' font-size='19.5' fill='#444' text-anchor='middle' dominant-baseline='central'>24</text><text x='1705.4' y='1077.1' transform='rotate(22 1705.4 1077.1)' font-family='Liberation Sans' font-size='19.5' fill='#444' text-anchor='middle' dominant-baseline='central'>25</text><text x='1734.4' y='1035.2' transform='rotate(22 1734.4 1035.2)' font-family='Liberation Sans' font-size='19.5' fill='#444' text-anchor='middle' dominant-baseline='central'>26</text><text x='1759.2' y='997.2' transform='rotate(22 1759.2 997.2)' font-family='Liberation Sans' font-size='19.5' fill='#444' text-anchor='middle' dominant-baseline='central'>27</text><text x='1782.1' y='965.5' transform='rotate(22 1782.1 965.5)' font-family='Liberation Sans' font-size='19.5' fill='#444' text-anchor='middle' dominant-baseline='central'>28</text><text x='1801.9' y='935.1' transform='rotate(22 1801.9 935.1)' font-family='Liberation Sans' font-size='19.5' fill='#444' text-anchor='middle' dominant-baseline='central'>29</text><text x='1819.0' y='909.8' transform='rotate(22 1819.0 909.8)' font-family='Liberation Sans' font-size='19.5' fill='#444' text-anchor='middle' dominant-baseline='central'>30</text><text x='1800.0' y='1040.0' transform='rotate(-61 1800.0 1040.0)' font-family='Liberation Sans' font-size='22.5' fill='#444' text-anchor='middle' dominant-baseline='central'>Visualization layer 2</text><text x='1316.0' y='1211.0' transform='rotate(34.5 1316.0 1211.0)' font-family='Liberation Sans' font-size='22.5' fill='#444' text-anchor='middle' dominant-baseline='central'>Visualization layer 1</text><path d='M1179.6 1077.2 L1180 1079.8 M1179.4 1090.3 Q1182 1094.5 1185 1094.5 Q1188 1093.5 1187.6 1090.5 Q1187 1087.5 1184.4 1086 M1180.8 1092.8 Q1180.6 1095.5 1179.2 1096.8' stroke='#444' stroke-width='1.5' fill='none'/><circle cx='1648' cy='712.3' r='7.9' fill='#1f77b4' stroke='#444' stroke-width='0.95'/><circle cx='1643.8' cy='714.8' r='7.9' fill='#1f77b4' stroke='#444' stroke-width='0.95'/><circle cx='1667.6' cy='714.8' r='7.9' fill='#1f77b4' stroke='#444' stroke-width='0.95'/><circle cx='1656.3' cy='716.4' r='7.9' fill='#1f77b4' stroke='#444' stroke-width='0.95'/><circle cx='1573.9' cy='717.4' r='7.9' fill='#1f77b4' stroke='#444' stroke-width='0.95'/><circle cx='1677' cy='717.4' r='7.9' fill='#1f77b4' stroke='#444' stroke-width='0.95'/><circle cx='1741.1' cy='720' r='7.9' fill='#1f77b4' stroke='#444' stroke-width='0.95'/><circle cx='1724.6' cy='722.1' r='7.9' fill='#1f77b4' stroke='#444' stroke-width='0.95'/><circle cx='1563.6' cy='723.1' r='7.9' fill='#1f77b4' stroke='#444' stroke-width='0.95'/><circle cx='1584.3' cy='723.1' r='7.9' fill='#1f77b4' stroke='#444' stroke-width='0.95'/><circle cx='1675.9' cy='723.1' r='7.9' fill='#1f77b4' stroke='#444' stroke-width='0.95'/><circle cx='1652.1' cy='724.7' r='7.9' fill='#1f77b4' stroke='#444' stroke-width='0.95'/><circle cx='1661.4' cy='725.2' r='7.9' fill='#1f77b4' stroke='#444' stroke-width='0.95'/><circle cx='1591.5' cy='726.2' r='7.9' fill='#1f77b4' stroke='#444' stroke-width='0.95'/><circle cx='1721.5' cy='726.2' r='7.9' fill='#1f77b4' stroke='#444' stroke-width='0.95'/><circle cx='1741.1' cy='727.3' r='7.9' fill='#1f77b4' stroke='#444' stroke-width='0.95'/><circle cx='1692.5' cy='728.8' r='7.9' fill='#1f77b4' stroke='#444' stroke-width='0.95'/><circle cx='1559.4' cy='729.9' r='7.9' fill='#1f77b4' stroke='#444' stroke-width='0.95'/><circle cx='1671.8' cy='732.4' r='7.9' fill='#1f77b4' stroke='#444' stroke-width='0.95'/><circle cx='1639.7' cy='732.4' r='7.9' fill='#1f77b4' stroke='#444' stroke-width='0.95'/><circle cx='1573.9' cy='733.5' r='7.9' fill='#1f77b4' stroke='#444' stroke-width='0.95'/><circle cx='1630.4' cy='733.5' r='7.9' fill='#1f77b4' stroke='#444' stroke-width='0.95'/><circle cx='1611.7' cy='735.5' r='7.9' fill='#1f77b4' stroke='#444' stroke-width='0.95'/><circle cx='1596.7' cy='736.6' r='7.9' fill='#1f77b4' stroke='#444' stroke-width='0.95'/><circle cx='1661.4' cy='736.6' r='7.9' fill='#1f77b4' stroke='#444' stroke-width='0.95'/><circle cx='1709' cy='737.1' r='7.9' fill='#1f77b4' stroke='#444' stroke-width='0.95'/><circle cx='1567.7' cy='737.6' r='7.9' fill='#1f77b4' stroke='#444' stroke-width='0.95'/><circle cx='1740.1' cy='738.7' r='7.9' fill='#1f77b4' stroke='#444' stroke-width='0.95'/><circle cx='1579.1' cy='739.7' r='7.9' fill='#1f77b4' stroke='#444' stroke-width='0.95'/><circle cx='1688.3' cy='739.7' r='7.9' fill='#1f77b4' stroke='#444' stroke-width='0.95'/><circle cx='1628.3' cy='739.7' r='7.9' fill='#1f77b4' stroke='#444' stroke-width='0.95'/><circle cx='1730.8' cy='740.7' r='7.9' fill='#1f77b4' stroke='#444' stroke-width='0.95'/><circle cx='1612.8' cy='740.7' r='7.9' fill='#1f77b4' stroke='#444' stroke-width='0.95'/><circle cx='1699.0' cy='741.0' r='7.9' fill='#1f77b4' stroke='#444' stroke-width='0.95'/><circle cx='1722.5' cy='741.8' r='7.9' fill='#1f77b4' stroke='#444' stroke-width='0.95'/><circle cx='1549.1' cy='742.8' r='7.9' fill='#1f77b4' stroke='#444' stroke-width='0.95'/><circle cx='1654.2' cy='743.8' r='7.9' fill='#1f77b4' stroke='#444' stroke-width='0.95'/><circle cx='1576' cy='744.9' r='7.9' fill='#1f77b4' stroke='#444' stroke-width='0.95'/><circle cx='1755.6' cy='744.9' r='7.9' fill='#1f77b4' stroke='#444' stroke-width='0.95'/><circle cx='1687.3' cy='745.9' r='7.9' fill='#1f77b4' stroke='#444' stroke-width='0.95'/><circle cx='1720.4' cy='748' r='7.9' fill='#1f77b4' stroke='#444' stroke-width='0.95'/><circle cx='1640.0' cy='748.0' r='7.9' fill='#1f77b4' stroke='#444' stroke-width='0.95'/><circle cx='1544.9' cy='749' r='7.9' fill='#1f77b4' stroke='#444' stroke-width='0.95'/><circle cx='1538.7' cy='749' r='7.9' fill='#1f77b4' stroke='#444' stroke-width='0.95'/><circle cx='1668.7' cy='749' r='7.9' fill='#1f77b4' stroke='#444' stroke-width='0.95'/><circle cx='1596.7' cy='750' r='7.9' fill='#1f77b4' stroke='#444' stroke-width='0.95'/><circle cx='1714.2' cy='751.1' r='7.9' fill='#1f77b4' stroke='#444' stroke-width='0.95'/><circle cx='1700' cy='752' r='7.9' fill='#1f77b4' stroke='#444' stroke-width='0.95'/><circle cx='1681' cy='752' r='7.9' fill='#1f77b4' stroke='#444' stroke-width='0.95'/><circle cx='1586.3' cy='752.1' r='7.9' fill='#1f77b4' stroke='#444' stroke-width='0.95'/><circle cx='1724.6' cy='752.1' r='7.9' fill='#1f77b4' stroke='#444' stroke-width='0.95'/><circle cx='1591' cy='752.1' r='7.9' fill='#1f77b4' stroke='#444' stroke-width='0.95'/><circle cx='1744.2' cy='753.1' r='7.9' fill='#1f77b4' stroke='#444' stroke-width='0.95'/><circle cx='1620.5' cy='753.7' r='7.9' fill='#1f77b4' stroke='#444' stroke-width='0.95'/><circle cx='1529.4' cy='756.3' r='7.9' fill='#1f77b4' stroke='#444' stroke-width='0.95'/><circle cx='1734.0' cy='757.0' r='7.9' fill='#1f77b4' stroke='#444' stroke-width='0.95'/><circle cx='1755.6' cy='757.3' r='7.9' fill='#1f77b4' stroke='#444' stroke-width='0.95'/><circle cx='1768' cy='758.3' r='7.9' fill='#1f77b4' stroke='#444' stroke-width='0.95'/><circle cx='1654.2' cy='758.3' r='7.9' fill='#1f77b4' stroke='#444' stroke-width='0.95'/><circle cx='1611.7' cy='759.4' r='7.9' fill='#1f77b4' stroke='#444' stroke-width='0.95'/><circle cx='1526.8' cy='762.5' r='7.9' fill='#1f77b4' stroke='#444' stroke-width='0.95'/><circle cx='1636.6' cy='762.5' r='7.9' fill='#1f77b4' stroke='#444' stroke-width='0.95'/><circle cx='1685.2' cy='762.5' r='7.9' fill='#1f77b4' stroke='#444' stroke-width='0.95'/><circle cx='1705.9' cy='762.5' r='7.9' fill='#1f77b4' stroke='#444' stroke-width='0.95'/><circle cx='1717' cy='762.5' r='7.9' fill='#1f77b4' stroke='#444' stroke-width='0.95'/><circle cx='1667.6' cy='764.5' r='7.9' fill='#1f77b4' stroke='#444' stroke-width='0.95'/><circle cx='1621.0' cy='765.0' r='7.9' fill='#1f77b4' stroke='#444' stroke-width='0.95'/><circle cx='1770.1' cy='766.6' r='7.9' fill='#1f77b4' stroke='#444' stroke-width='0.95'/><circle cx='1734.9' cy='767.6' r='7.9' fill='#1f77b4' stroke='#444' stroke-width='0.95'/><circle cx='1604.0' cy='768.0' r='7.9' fill='#1f77b4' stroke='#444' stroke-width='0.95'/><circle cx='1565.6' cy='768.7' r='7.9' fill='#1f77b4' stroke='#444' stroke-width='0.95'/><circle cx='1630.9' cy='768.7' r='7.9' fill='#1f77b4' stroke='#444' stroke-width='0.95'/><circle cx='1709' cy='768.7' r='7.9' fill='#1f77b4' stroke='#444' stroke-width='0.95'/><circle cx='1763.9' cy='770.7' r='7.9' fill='#1f77b4' stroke='#444' stroke-width='0.95'/><circle cx='1646.9' cy='771.8' r='7.9' fill='#1f77b4' stroke='#444' stroke-width='0.95'/><circle cx='1701.8' cy='771.8' r='7.9' fill='#1f77b4' stroke='#444' stroke-width='0.95'/><circle cx='1745' cy='772.8' r='7.9' fill='#1f77b4' stroke='#444' stroke-width='0.95'/><circle cx='1664.5' cy='773.9' r='7.9' fill='#1f77b4' stroke='#444' stroke-width='0.95'/><circle cx='1613.8' cy='773.9' r='7.9' fill='#1f77b4' stroke='#444' stroke-width='0.95'/><circle cx='1594.6' cy='774.9' r='7.9' fill='#1f77b4' stroke='#444' stroke-width='0.95'/><circle cx='1578' cy='775.9' r='7.9' fill='#1f77b4' stroke='#444' stroke-width='0.95'/><circle cx='1724.6' cy='776' r='7.9' fill='#1f77b4' stroke='#444' stroke-width='0.95'/><circle cx='1715.3' cy='777' r='7.9' fill='#1f77b4' stroke='#444' stroke-width='0.95'/><circle cx='1693.5' cy='778' r='7.9' fill='#1f77b4' stroke='#444' stroke-width='0.95'/><circle cx='1780.5' cy='779' r='7.9' fill='#1f77b4' stroke='#444' stroke-width='0.95'/><circle cx='1639.7' cy='779' r='7.9' fill='#1f77b4' stroke='#444' stroke-width='0.95'/><circle cx='1755.0' cy='779.0' r='7.9' fill='#1f77b4' stroke='#444' stroke-width='0.95'/><circle cx='1596.7' cy='780.1' r='7.9' fill='#1f77b4' stroke='#444' stroke-width='0.95'/><circle cx='1603.5' cy='780.1' r='7.9' fill='#1f77b4' stroke='#444' stroke-width='0.95'/><circle cx='1675.9' cy='781.1' r='7.9' fill='#1f77b4' stroke='#444' stroke-width='0.95'/><circle cx='1650' cy='782' r='7.9' fill='#1f77b4' stroke='#444' stroke-width='0.95'/><circle cx='1526.8' cy='782.1' r='7.9' fill='#1f77b4' stroke='#444' stroke-width='0.95'/><circle cx='1541.3' cy='782.1' r='7.9' fill='#1f77b4' stroke='#444' stroke-width='0.95'/><circle cx='1577' cy='783.2' r='7.9' fill='#1f77b4' stroke='#444' stroke-width='0.95'/><circle cx='1780.5' cy='783.2' r='7.9' fill='#1f77b4' stroke='#444' stroke-width='0.95'/><circle cx='1701.8' cy='783.2' r='7.9' fill='#1f77b4' stroke='#444' stroke-width='0.95'/><circle cx='1616.0' cy='785.0' r='7.9' fill='#1f77b4' stroke='#444' stroke-width='0.95'/><circle cx='1514.9' cy='785.2' r='7.9' fill='#1f77b4' stroke='#444' stroke-width='0.95'/><circle cx='1627.3' cy='785.2' r='7.9' fill='#1f77b4' stroke='#444' stroke-width='0.95'/><circle cx='1732.9' cy='785.2' r='7.9' fill='#1f77b4' stroke='#444' stroke-width='0.95'/><circle cx='1764.0' cy='786.0' r='7.9' fill='#1f77b4' stroke='#444' stroke-width='0.95'/><circle cx='1504.6' cy='786.3' r='7.9' fill='#1f77b4' stroke='#444' stroke-width='0.95'/><circle cx='1667.0' cy='788.0' r='7.9' fill='#1f77b4' stroke='#444' stroke-width='0.95'/><circle cx='1686.8' cy='788.9' r='7.9' fill='#1f77b4' stroke='#444' stroke-width='0.95'/><circle cx='1641.8' cy='789.4' r='7.9' fill='#1f77b4' stroke='#444' stroke-width='0.95'/><circle cx='1655.2' cy='789.4' r='7.9' fill='#1f77b4' stroke='#444' stroke-width='0.95'/><circle cx='1748.4' cy='789.4' r='7.9' fill='#1f77b4' stroke='#444' stroke-width='0.95'/><circle cx='1714.2' cy='789.4' r='7.9' fill='#1f77b4' stroke='#444' stroke-width='0.95'/><circle cx='1784.6' cy='791.4' r='7.9' fill='#1f77b4' stroke='#444' stroke-width='0.95'/><circle cx='1698.0' cy='793.0' r='7.9' fill='#1f77b4' stroke='#444' stroke-width='0.95'/><circle cx='1586.3' cy='793.5' r='7.9' fill='#1f77b4' stroke='#444' stroke-width='0.95'/><circle cx='1541.8' cy='793.5' r='7.9' fill='#1f77b4' stroke='#444' stroke-width='0.95'/><circle cx='1592.1' cy='793.5' r='7.9' fill='#1f77b4' stroke='#444' stroke-width='0.95'/><circle cx='1608.0' cy='795.0' r='7.9' fill='#1f77b4' stroke='#444' stroke-width='0.95'/><circle cx='1623.0' cy='795.0' r='7.9' fill='#1f77b4' stroke='#444' stroke-width='0.95'/><circle cx='1759.0' cy='796.0' r='7.9' fill='#1f77b4' stroke='#444' stroke-width='0.95'/><circle cx='1674.9' cy='796.6' r='7.9' fill='#1f77b4' stroke='#444' stroke-width='0.95'/><circle cx='1633.5' cy='797.7' r='7.9' fill='#1f77b4' stroke='#444' stroke-width='0.95'/><circle cx='1724.6' cy='797.7' r='7.9' fill='#1f77b4' stroke='#444' stroke-width='0.95'/><circle cx='1790.3' cy='797.8' r='7.9' fill='#1f77b4' stroke='#444' stroke-width='0.95'/><circle cx='1658.3' cy='798.7' r='7.9' fill='#1f77b4' stroke='#444' stroke-width='0.95'/><circle cx='1647.0' cy='799.0' r='7.9' fill='#1f77b4' stroke='#444' stroke-width='0.95'/><circle cx='1744.2' cy='799.7' r='7.9' fill='#1f77b4' stroke='#444' stroke-width='0.95'/><circle cx='1779.4' cy='799.7' r='7.9' fill='#1f77b4' stroke='#444' stroke-width='0.95'/><circle cx='1770' cy='800' r='7.9' fill='#1f77b4' stroke='#444' stroke-width='0.95'/><circle cx='1690' cy='800' r='7.9' fill='#1f77b4' stroke='#444' stroke-width='0.95'/><circle cx='1666.6' cy='800.8' r='7.9' fill='#1f77b4' stroke='#444' stroke-width='0.95'/><circle cx='1585.3' cy='801.8' r='7.9' fill='#1f77b4' stroke='#444' stroke-width='0.95'/><circle cx='1705.9' cy='801.8' r='7.9' fill='#1f77b4' stroke='#444' stroke-width='0.95'/><circle cx='1785.1' cy='803' r='7.9' fill='#1f77b4' stroke='#444' stroke-width='0.95'/><circle cx='1547' cy='803.9' r='7.9' fill='#1f77b4' stroke='#444' stroke-width='0.95'/><circle cx='1619' cy='804.9' r='7.9' fill='#1f77b4' stroke='#444' stroke-width='0.95'/><circle cx='1752' cy='805' r='7.9' fill='#1f77b4' stroke='#444' stroke-width='0.95'/><circle cx='1735' cy='805' r='7.9' fill='#1f77b4' stroke='#444' stroke-width='0.95'/><circle cx='1594.1' cy='805.9' r='7.9' fill='#1f77b4' stroke='#444' stroke-width='0.95'/><circle cx='1694.6' cy='805.9' r='7.9' fill='#1f77b4' stroke='#444' stroke-width='0.95'/><circle cx='1763.9' cy='805.9' r='7.9' fill='#1f77b4' stroke='#444' stroke-width='0.95'/><circle cx='1591.5' cy='807' r='7.9' fill='#1f77b4' stroke='#444' stroke-width='0.95'/><circle cx='1559.4' cy='807' r='7.9' fill='#1f77b4' stroke='#444' stroke-width='0.95'/><circle cx='1641.0' cy='809.0' r='7.9' fill='#1f77b4' stroke='#444' stroke-width='0.95'/><circle cx='1684.0' cy='810.0' r='7.9' fill='#1f77b4' stroke='#444' stroke-width='0.95'/><circle cx='1711.1' cy='810.1' r='7.9' fill='#1f77b4' stroke='#444' stroke-width='0.95'/><circle cx='1559.4' cy='811' r='7.9' fill='#1f77b4' stroke='#444' stroke-width='0.95'/><circle cx='1652.1' cy='811.1' r='7.9' fill='#1f77b4' stroke='#444' stroke-width='0.95'/><circle cx='1726.6' cy='811.1' r='7.9' fill='#1f77b4' stroke='#444' stroke-width='0.95'/><circle cx='1591.5' cy='812.1' r='7.9' fill='#1f77b4' stroke='#444' stroke-width='0.95'/><circle cx='1695' cy='813' r='7.9' fill='#1f77b4' stroke='#444' stroke-width='0.95'/><circle cx='1703.9' cy='813.1' r='7.9' fill='#1f77b4' stroke='#444' stroke-width='0.95'/><circle cx='1673.8' cy='813.2' r='7.9' fill='#1f77b4' stroke='#444' stroke-width='0.95'/><circle cx='1781.5' cy='813.2' r='7.9' fill='#1f77b4' stroke='#444' stroke-width='0.95'/><circle cx='1653.1' cy='814.1' r='7.9' fill='#1f77b4' stroke='#444' stroke-width='0.95'/><circle cx='1711.1' cy='814.1' r='7.9' fill='#1f77b4' stroke='#444' stroke-width='0.95'/><circle cx='1764.9' cy='814.1' r='7.9' fill='#1f77b4' stroke='#444' stroke-width='0.95'/><circle cx='1608.6' cy='814.2' r='7.9' fill='#1f77b4' stroke='#444' stroke-width='0.95'/><circle cx='1753.6' cy='814.2' r='7.9' fill='#1f77b4' stroke='#444' stroke-width='0.95'/><circle cx='1726.6' cy='815.2' r='7.9' fill='#1f77b4' stroke='#444' stroke-width='0.95'/><circle cx='1621.0' cy='816.0' r='7.9' fill='#1f77b4' stroke='#444' stroke-width='0.95'/><circle cx='1751.5' cy='818.3' r='7.9' fill='#1f77b4' stroke='#444' stroke-width='0.95'/><circle cx='1766' cy='818.4' r='7.9' fill='#1f77b4' stroke='#444' stroke-width='0.95'/><circle cx='1503.5' cy='819.3' r='7.9' fill='#1f77b4' stroke='#444' stroke-width='0.95'/><circle cx='1689.4' cy='820.4' r='7.9' fill='#1f77b4' stroke='#444' stroke-width='0.95'/><circle cx='1737' cy='820.4' r='7.9' fill='#1f77b4' stroke='#444' stroke-width='0.95'/><circle cx='1518' cy='820.4' r='7.9' fill='#1f77b4' stroke='#444' stroke-width='0.95'/><circle cx='1658.3' cy='822.4' r='7.9' fill='#1f77b4' stroke='#444' stroke-width='0.95'/><circle cx='1683.2' cy='822.4' r='7.9' fill='#1f77b4' stroke='#444' stroke-width='0.95'/><circle cx='1469.4' cy='824.5' r='7.9' fill='#1f77b4' stroke='#444' stroke-width='0.95'/><circle cx='1739.1' cy='824.5' r='7.9' fill='#1f77b4' stroke='#444' stroke-width='0.95'/><circle cx='1768' cy='825.5' r='7.9' fill='#1f77b4' stroke='#444' stroke-width='0.95'/><circle cx='1750.5' cy='825.5' r='7.9' fill='#1f77b4' stroke='#444' stroke-width='0.95'/><circle cx='1719.4' cy='825.5' r='7.9' fill='#1f77b4' stroke='#444' stroke-width='0.95'/><circle cx='1625.2' cy='826.6' r='7.9' fill='#1f77b4' stroke='#444' stroke-width='0.95'/><circle cx='1702.8' cy='826.6' r='7.9' fill='#1f77b4' stroke='#444' stroke-width='0.95'/><circle cx='1691.4' cy='827.6' r='7.9' fill='#1f77b4' stroke='#444' stroke-width='0.95'/><circle cx='1608.0' cy='828.0' r='7.9' fill='#1f77b4' stroke='#444' stroke-width='0.95'/><circle cx='1669.7' cy='828.6' r='7.9' fill='#1f77b4' stroke='#444' stroke-width='0.95'/><circle cx='1774.3' cy='828.6' r='7.9' fill='#1f77b4' stroke='#444' stroke-width='0.95'/><circle cx='1700' cy='830' r='7.9' fill='#1f77b4' stroke='#444' stroke-width='0.95'/><circle cx='1730.4' cy='830.3' r='7.9' fill='#1f77b4' stroke='#444' stroke-width='0.95'/><circle cx='1529.4' cy='830.7' r='7.9' fill='#1f77b4' stroke='#444' stroke-width='0.95'/><circle cx='1760.8' cy='830.7' r='7.9' fill='#1f77b4' stroke='#444' stroke-width='0.95'/><circle cx='1731.8' cy='832.8' r='7.9' fill='#1f77b4' stroke='#444' stroke-width='0.95'/><circle cx='1716.3' cy='833.8' r='7.9' fill='#1f77b4' stroke='#444' stroke-width='0.95'/><circle cx='1775.3' cy='833.8' r='7.9' fill='#1f77b4' stroke='#444' stroke-width='0.95'/><circle cx='1652.1' cy='835.9' r='7.9' fill='#1f77b4' stroke='#444' stroke-width='0.95'/><circle cx='1638.7' cy='836.9' r='7.9' fill='#1f77b4' stroke='#444' stroke-width='0.95'/><circle cx='1466.3' cy='838' r='7.9' fill='#1f77b4' stroke='#444' stroke-width='0.95'/><circle cx='1755.6' cy='838' r='7.9' fill='#1f77b4' stroke='#444' stroke-width='0.95'/><circle cx='1740' cy='838' r='7.9' fill='#1f77b4' stroke='#444' stroke-width='0.95'/><circle cx='1693.5' cy='840' r='7.9' fill='#1f77b4' stroke='#444' stroke-width='0.95'/><circle cx='1731.7' cy='840.8' r='7.9' fill='#1f77b4' stroke='#444' stroke-width='0.95'/><circle cx='1706' cy='841' r='7.9' fill='#1f77b4' stroke='#444' stroke-width='0.95'/><circle cx='1679' cy='841.1' r='7.9' fill='#1f77b4' stroke='#444' stroke-width='0.95'/><circle cx='1662.5' cy='841.1' r='7.9' fill='#1f77b4' stroke='#444' stroke-width='0.95'/><circle cx='1611.7' cy='841.1' r='7.9' fill='#1f77b4' stroke='#444' stroke-width='0.95'/><circle cx='1484.9' cy='842.1' r='7.9' fill='#1f77b4' stroke='#444' stroke-width='0.95'/><circle cx='1563.6' cy='844.2' r='7.9' fill='#1f77b4' stroke='#444' stroke-width='0.95'/><circle cx='1621.1' cy='844.2' r='7.9' fill='#1f77b4' stroke='#444' stroke-width='0.95'/><circle cx='1765' cy='845' r='7.9' fill='#1f77b4' stroke='#444' stroke-width='0.95'/><circle cx='1745' cy='845' r='7.9' fill='#1f77b4' stroke='#444' stroke-width='0.95'/><circle cx='1433.1' cy='845.2' r='7.9' fill='#1f77b4' stroke='#444' stroke-width='0.95'/><circle cx='1544.9' cy='845.2' r='7.9' fill='#1f77b4' stroke='#444' stroke-width='0.95'/><circle cx='1721.5' cy='846.2' r='7.9' fill='#1f77b4' stroke='#444' stroke-width='0.95'/><circle cx='1712.2' cy='846.2' r='7.9' fill='#1f77b4' stroke='#444' stroke-width='0.95'/><circle cx='1528.4' cy='847.3' r='7.9' fill='#1f77b4' stroke='#444' stroke-width='0.95'/><circle cx='1652.0' cy='848.0' r='7.9' fill='#1f77b4' stroke='#444' stroke-width='0.95'/><circle cx='1663.5' cy='848.3' r='7.9' fill='#1f77b4' stroke='#444' stroke-width='0.95'/><circle cx='1630.0' cy='850.0' r='7.9' fill='#1f77b4' stroke='#444' stroke-width='0.95'/><circle cx='1687.3' cy='850.4' r='7.9' fill='#1f77b4' stroke='#444' stroke-width='0.95'/><circle cx='1640.7' cy='850.4' r='7.9' fill='#1f77b4' stroke='#444' stroke-width='0.95'/><circle cx='1755.6' cy='851.4' r='7.9' fill='#1f77b4' stroke='#444' stroke-width='0.95'/><circle cx='1746.3' cy='851.4' r='7.9' fill='#1f77b4' stroke='#444' stroke-width='0.95'/><circle cx='1614.8' cy='851.4' r='7.9' fill='#1f77b4' stroke='#444' stroke-width='0.95'/><circle cx='1561.5' cy='852.4' r='7.9' fill='#1f77b4' stroke='#444' stroke-width='0.95'/><circle cx='1574.9' cy='852.4' r='7.9' fill='#1f77b4' stroke='#444' stroke-width='0.95'/><circle cx='1701.8' cy='854.5' r='7.9' fill='#1f77b4' stroke='#444' stroke-width='0.95'/><circle cx='1717.0' cy='856.0' r='7.9' fill='#1f77b4' stroke='#444' stroke-width='0.95'/><circle cx='1678' cy='856.6' r='7.9' fill='#1f77b4' stroke='#444' stroke-width='0.95'/><circle cx='1757.7' cy='858.7' r='7.9' fill='#1f77b4' stroke='#444' stroke-width='0.95'/><circle cx='1727.8' cy='859' r='7.9' fill='#1f77b4' stroke='#444' stroke-width='0.95'/><circle cx='1738' cy='859.7' r='7.9' fill='#1f77b4' stroke='#444' stroke-width='0.95'/><circle cx='1643.8' cy='859.7' r='7.9' fill='#1f77b4' stroke='#444' stroke-width='0.95'/><circle cx='1626.2' cy='860.7' r='7.9' fill='#1f77b4' stroke='#444' stroke-width='0.95'/><circle cx='1662.0' cy='862.0' r='7.9' fill='#1f77b4' stroke='#444' stroke-width='0.95'/><circle cx='1725.6' cy='863.8' r='7.9' fill='#1f77b4' stroke='#444' stroke-width='0.95'/><circle cx='1478.7' cy='865.9' r='7.9' fill='#1f77b4' stroke='#444' stroke-width='0.95'/><circle cx='1742.2' cy='865.9' r='7.9' fill='#1f77b4' stroke='#444' stroke-width='0.95'/><circle cx='1713.2' cy='865.9' r='7.9' fill='#1f77b4' stroke='#444' stroke-width='0.95'/><circle cx='1445.5' cy='866' r='7.9' fill='#1f77b4' stroke='#444' stroke-width='0.95'/><circle cx='1678' cy='866.9' r='7.9' fill='#1f77b4' stroke='#444' stroke-width='0.95'/><circle cx='1700.8' cy='868' r='7.9' fill='#1f77b4' stroke='#444' stroke-width='0.95'/><circle cx='1625.2' cy='868' r='7.9' fill='#1f77b4' stroke='#444' stroke-width='0.95'/><circle cx='1467.3' cy='871.1' r='7.9' fill='#1f77b4' stroke='#444' stroke-width='0.95'/><circle cx='1671.8' cy='871.1' r='7.9' fill='#1f77b4' stroke='#444' stroke-width='0.95'/><circle cx='1652.1' cy='871.1' r='7.9' fill='#1f77b4' stroke='#444' stroke-width='0.95'/><circle cx='1729.8' cy='873.1' r='7.9' fill='#1f77b4' stroke='#444' stroke-width='0.95'/><circle cx='1637.6' cy='873.1' r='7.9' fill='#1f77b4' stroke='#444' stroke-width='0.95'/><circle cx='1614.8' cy='875.2' r='7.9' fill='#1f77b4' stroke='#444' stroke-width='0.95'/><circle cx='1710.1' cy='876.3' r='7.9' fill='#1f77b4' stroke='#444' stroke-width='0.95'/><circle cx='1686.3' cy='876.3' r='7.9' fill='#1f77b4' stroke='#444' stroke-width='0.95'/><circle cx='1633.5' cy='878.3' r='7.9' fill='#1f77b4' stroke='#444' stroke-width='0.95'/><circle cx='1665.0' cy='880.0' r='7.9' fill='#1f77b4' stroke='#444' stroke-width='0.95'/><circle cx='1654.2' cy='880.4' r='7.9' fill='#1f77b4' stroke='#444' stroke-width='0.95'/><circle cx='1449.7' cy='882.5' r='7.9' fill='#1f77b4' stroke='#444' stroke-width='0.95'/><circle cx='1701.8' cy='882.5' r='7.9' fill='#1f77b4' stroke='#444' stroke-width='0.95'/><circle cx='1550.1' cy='883.5' r='7.9' fill='#1f77b4' stroke='#444' stroke-width='0.95'/><circle cx='1685.2' cy='883.5' r='7.9' fill='#1f77b4' stroke='#444' stroke-width='0.95'/><circle cx='1614.8' cy='883.5' r='7.9' fill='#1f77b4' stroke='#444' stroke-width='0.95'/><circle cx='1493.2' cy='884.5' r='7.9' fill='#1f77b4' stroke='#444' stroke-width='0.95'/><circle cx='1671.8' cy='888.7' r='7.9' fill='#1f77b4' stroke='#444' stroke-width='0.95'/><circle cx='1638.7' cy='888.7' r='7.9' fill='#1f77b4' stroke='#444' stroke-width='0.95'/><circle cx='1499.4' cy='889.7' r='7.9' fill='#1f77b4' stroke='#444' stroke-width='0.95'/><circle cx='1649' cy='889.7' r='7.9' fill='#1f77b4' stroke='#444' stroke-width='0.95'/><circle cx='1523.2' cy='890.7' r='7.9' fill='#1f77b4' stroke='#444' stroke-width='0.95'/><circle cx='1487' cy='891.8' r='7.9' fill='#1f77b4' stroke='#444' stroke-width='0.95'/><circle cx='1513.9' cy='892.8' r='7.9' fill='#1f77b4' stroke='#444' stroke-width='0.95'/><circle cx='1675.9' cy='892.8' r='7.9' fill='#1f77b4' stroke='#444' stroke-width='0.95'/><circle cx='1559.4' cy='894.9' r='7.9' fill='#1f77b4' stroke='#444' stroke-width='0.95'/><circle cx='1664.5' cy='897' r='7.9' fill='#1f77b4' stroke='#444' stroke-width='0.95'/><circle cx='1542.9' cy='898' r='7.9' fill='#1f77b4' stroke='#444' stroke-width='0.95'/><circle cx='1461.1' cy='899' r='7.9' fill='#1f77b4' stroke='#444' stroke-width='0.95'/><circle cx='1657.3' cy='900.1' r='7.9' fill='#1f77b4' stroke='#444' stroke-width='0.95'/><circle cx='1535.6' cy='901.1' r='7.9' fill='#1f77b4' stroke='#444' stroke-width='0.95'/><circle cx='1510.8' cy='903.2' r='7.9' fill='#1f77b4' stroke='#444' stroke-width='0.95'/><circle cx='1483.9' cy='906.3' r='7.9' fill='#1f77b4' stroke='#444' stroke-width='0.95'/><circle cx='1562.5' cy='909.4' r='7.9' fill='#1f77b4' stroke='#444' stroke-width='0.95'/><circle cx='1467.3' cy='909.4' r='7.9' fill='#1f77b4' stroke='#444' stroke-width='0.95'/><circle cx='1520.1' cy='911.4' r='7.9' fill='#1f77b4' stroke='#444' stroke-width='0.95'/><circle cx='1529.4' cy='911.4' r='7.9' fill='#1f77b4' stroke='#444' stroke-width='0.95'/><circle cx='1549.1' cy='915.6' r='7.9' fill='#1f77b4' stroke='#444' stroke-width='0.95'/><circle cx='1567.7' cy='916.6' r='7.9' fill='#1f77b4' stroke='#444' stroke-width='0.95'/><circle cx='1538.7' cy='916.6' r='7.9' fill='#1f77b4' stroke='#444' stroke-width='0.95'/><circle cx='1554.2' cy='922.8' r='7.9' fill='#1f77b4' stroke='#444' stroke-width='0.95'/><circle cx='1547' cy='922.8' r='7.9' fill='#1f77b4' stroke='#444' stroke-width='0.95'/><circle cx='1451.3' cy='1064.7' r='7.9' fill='#1f77b4' stroke='#444' stroke-width='0.95'/><circle cx='1465.5' cy='1079' r='7.9' fill='#1f77b4' stroke='#444' stroke-width='0.95'/><circle cx='1491.8' cy='1087.7' r='7.9' fill='#1f77b4' stroke='#444' stroke-width='0.95'/><circle cx='1460.5' cy='1090.5' r='7.9' fill='#1f77b4' stroke='#444' stroke-width='0.95'/><circle cx='1443' cy='1092.3' r='7.9' fill='#1f77b4' stroke='#444' stroke-width='0.95'/><circle cx='1439.3' cy='1097.8' r='7.9' fill='#1f77b4' stroke='#444' stroke-width='0.95'/><circle cx='1449.4' cy='1105.2' r='7.9' fill='#1f77b4' stroke='#444' stroke-width='0.95'/><circle cx='1463.7' cy='1105.7' r='7.9' fill='#1f77b4' stroke='#444' stroke-width='0.95'/><circle cx='1494.1' cy='1113.5' r='7.9' fill='#1f77b4' stroke='#444' stroke-width='0.95'/><circle cx='1531.3' cy='1115.8' r='7.9' fill='#1f77b4' stroke='#444' stroke-width='0.95'/><circle cx='1538.2' cy='1116.7' r='7.9' fill='#1f77b4' stroke='#444' stroke-width='0.95'/><circle cx='1454' cy='1119.9' r='7.9' fill='#1f77b4' stroke='#444' stroke-width='0.95'/><circle cx='1457.7' cy='1121.3' r='7.9' fill='#1f77b4' stroke='#444' stroke-width='0.95'/><circle cx='1517.5' cy='1130' r='7.9' fill='#1f77b4' stroke='#444' stroke-width='0.95'/><circle cx='1458.2' cy='1132.8' r='7.9' fill='#1f77b4' stroke='#444' stroke-width='0.95'/><circle cx='1497.3' cy='1132.8' r='7.9' fill='#1f77b4' stroke='#444' stroke-width='0.95'/><circle cx='1511.1' cy='1133.3' r='7.9' fill='#1f77b4' stroke='#444' stroke-width='0.95'/><circle cx='1525.8' cy='1136' r='7.9' fill='#1f77b4' stroke='#444' stroke-width='0.95'/><circle cx='1513.8' cy='1137.4' r='7.9' fill='#1f77b4' stroke='#444' stroke-width='0.95'/><circle cx='1486.2' cy='1139.2' r='7.9' fill='#1f77b4' stroke='#444' stroke-width='0.95'/><circle cx='1465.1' cy='1142.5' r='7.9' fill='#1f77b4' stroke='#444' stroke-width='0.95'/><circle cx='1494.5' cy='1144.3' r='7.9' fill='#1f77b4' stroke='#444' stroke-width='0.95'/><circle cx='1505.6' cy='1144.8' r='7.9' fill='#1f77b4' stroke='#444' stroke-width='0.95'/><circle cx='1482.6' cy='1147.5' r='7.9' fill='#1f77b4' stroke='#444' stroke-width='0.95'/><circle cx='1466.9' cy='1152.1' r='7.9' fill='#1f77b4' stroke='#444' stroke-width='0.95'/><circle cx='1483.5' cy='1154.9' r='7.9' fill='#1f77b4' stroke='#444' stroke-width='0.95'/><circle cx='1498.2' cy='1154.9' r='7.9' fill='#1f77b4' stroke='#444' stroke-width='0.95'/><circle cx='1488.1' cy='1154.9' r='7.9' fill='#1f77b4' stroke='#444' stroke-width='0.95'/><circle cx='1486.2' cy='1157.6' r='7.9' fill='#1f77b4' stroke='#444' stroke-width='0.95'/><circle cx='1504' cy='793.5' r='7.9' fill='#ff7f0e' stroke='#444' stroke-width='0.95'/><circle cx='1527.3' cy='800.8' r='7.9' fill='#ff7f0e' stroke='#444' stroke-width='0.95'/><circle cx='1482.8' cy='802.3' r='7.9' fill='#ff7f0e' stroke='#444' stroke-width='0.95'/><circle cx='1491.1' cy='802.8' r='7.9' fill='#ff7f0e' stroke='#444' stroke-width='0.95'/><circle cx='1472.5' cy='803.9' r='7.9' fill='#ff7f0e' stroke='#444' stroke-width='0.95'/><circle cx='1536.6' cy='804.9' r='7.9' fill='#ff7f0e' stroke='#444' stroke-width='0.95'/><circle cx='1557.3' cy='804.9' r='7.9' fill='#ff7f0e' stroke='#444' stroke-width='0.95'/><circle cx='1512.3' cy='808.5' r='7.9' fill='#ff7f0e' stroke='#444' stroke-width='0.95'/><circle cx='1548' cy='810.1' r='7.9' fill='#ff7f0e' stroke='#444' stroke-width='0.95'/><circle cx='1511.8' cy='812.1' r='7.9' fill='#ff7f0e' stroke='#444' stroke-width='0.95'/><circle cx='1496.3' cy='812.7' r='7.9' fill='#ff7f0e' stroke='#444' stroke-width='0.95'/><circle cx='1460.6' cy='813.2' r='7.9' fill='#ff7f0e' stroke='#444' stroke-width='0.95'/><circle cx='1528.4' cy='813.7' r='7.9' fill='#ff7f0e' stroke='#444' stroke-width='0.95'/><circle cx='1474.5' cy='814.7' r='7.9' fill='#ff7f0e' stroke='#444' stroke-width='0.95'/><circle cx='1632.4' cy='816.3' r='7.9' fill='#ff7f0e' stroke='#444' stroke-width='0.95'/><circle cx='1642.3' cy='819.4' r='7.9' fill='#ff7f0e' stroke='#444' stroke-width='0.95'/><circle cx='1451.8' cy='821.5' r='7.9' fill='#ff7f0e' stroke='#444' stroke-width='0.95'/><circle cx='1541.8' cy='823.5' r='7.9' fill='#ff7f0e' stroke='#444' stroke-width='0.95'/><circle cx='1584.3' cy='823.5' r='7.9' fill='#ff7f0e' stroke='#444' stroke-width='0.95'/><circle cx='1594.6' cy='823.5' r='7.9' fill='#ff7f0e' stroke='#444' stroke-width='0.95'/><circle cx='1482.8' cy='824.5' r='7.9' fill='#ff7f0e' stroke='#444' stroke-width='0.95'/><circle cx='1594.6' cy='826.6' r='7.9' fill='#ff7f0e' stroke='#444' stroke-width='0.95'/><circle cx='1499.4' cy='829.7' r='7.9' fill='#ff7f0e' stroke='#444' stroke-width='0.95'/><circle cx='1448.7' cy='832.8' r='7.9' fill='#ff7f0e' stroke='#444' stroke-width='0.95'/><circle cx='1573.9' cy='832.8' r='7.9' fill='#ff7f0e' stroke='#444' stroke-width='0.95'/><circle cx='1491.1' cy='833.8' r='7.9' fill='#ff7f0e' stroke='#444' stroke-width='0.95'/><circle cx='1517' cy='835.9' r='7.9' fill='#ff7f0e' stroke='#444' stroke-width='0.95'/><circle cx='1522.2' cy='841.1' r='7.9' fill='#ff7f0e' stroke='#444' stroke-width='0.95'/><circle cx='1493.2' cy='844.2' r='7.9' fill='#ff7f0e' stroke='#444' stroke-width='0.95'/><circle cx='1576' cy='847.3' r='7.9' fill='#ff7f0e' stroke='#444' stroke-width='0.95'/><circle cx='1445.5' cy='849.3' r='7.9' fill='#ff7f0e' stroke='#444' stroke-width='0.95'/><circle cx='1470.4' cy='850.4' r='7.9' fill='#ff7f0e' stroke='#444' stroke-width='0.95'/><circle cx='1526.3' cy='854.5' r='7.9' fill='#ff7f0e' stroke='#444' stroke-width='0.95'/><circle cx='1542.9' cy='856.1' r='7.9' fill='#ff7f0e' stroke='#444' stroke-width='0.95'/><circle cx='1451.8' cy='859.7' r='7.9' fill='#ff7f0e' stroke='#444' stroke-width='0.95'/><circle cx='1438.3' cy='861.8' r='7.9' fill='#ff7f0e' stroke='#444' stroke-width='0.95'/><circle cx='1510.8' cy='867.5' r='7.9' fill='#ff7f0e' stroke='#444' stroke-width='0.95'/><circle cx='1453.8' cy='868' r='7.9' fill='#ff7f0e' stroke='#444' stroke-width='0.95'/><circle cx='1438.3' cy='869' r='7.9' fill='#ff7f0e' stroke='#444' stroke-width='0.95'/><circle cx='1480.7' cy='874.2' r='7.9' fill='#ff7f0e' stroke='#444' stroke-width='0.95'/><circle cx='1438.8' cy='882.5' r='7.9' fill='#ff7f0e' stroke='#444' stroke-width='0.95'/><circle cx='1461.1' cy='884.5' r='7.9' fill='#ff7f0e' stroke='#444' stroke-width='0.95'/><circle cx='1437.3' cy='893.9' r='7.9' fill='#ff7f0e' stroke='#444' stroke-width='0.95'/><circle cx='1461.1' cy='905.2' r='7.9' fill='#ff7f0e' stroke='#444' stroke-width='0.95'/><circle cx='1476.6' cy='923.9' r='7.9' fill='#ff7f0e' stroke='#444' stroke-width='0.95'/><circle cx='1589.4' cy='835.9' r='7.9' fill='#1f77b4' stroke='#444' stroke-width='0.95'/><circle cx='1461.1' cy='846.2' r='7.9' fill='#1f77b4' stroke='#444' stroke-width='0.95'/><circle cx='1598.8' cy='850.4' r='7.9' fill='#1f77b4' stroke='#444' stroke-width='0.95'/><circle cx='1493.2' cy='854.5' r='7.9' fill='#1f77b4' stroke='#444' stroke-width='0.95'/><circle cx='1561.5' cy='860.7' r='7.9' fill='#1f77b4' stroke='#444' stroke-width='0.95'/><circle cx='1525.3' cy='860.7' r='7.9' fill='#1f77b4' stroke='#444' stroke-width='0.95'/><circle cx='1567.7' cy='868' r='7.9' fill='#1f77b4' stroke='#444' stroke-width='0.95'/><circle cx='1422.8' cy='868' r='7.9' fill='#1f77b4' stroke='#444' stroke-width='0.95'/><circle cx='1524.2' cy='872.1' r='7.9' fill='#1f77b4' stroke='#444' stroke-width='0.95'/><circle cx='1526.3' cy='876.3' r='7.9' fill='#1f77b4' stroke='#444' stroke-width='0.95'/><circle cx='1418.6' cy='877.3' r='7.9' fill='#1f77b4' stroke='#444' stroke-width='0.95'/><circle cx='1416.6' cy='897' r='7.9' fill='#1f77b4' stroke='#444' stroke-width='0.95'/><circle cx='1474.5' cy='932.2' r='7.9' fill='#1f77b4' stroke='#444' stroke-width='0.95'/></g></svg><div class='r' style='left:0px;top:1304px;width:1932px;height:1px;background:#606060;'></div></body></html>
